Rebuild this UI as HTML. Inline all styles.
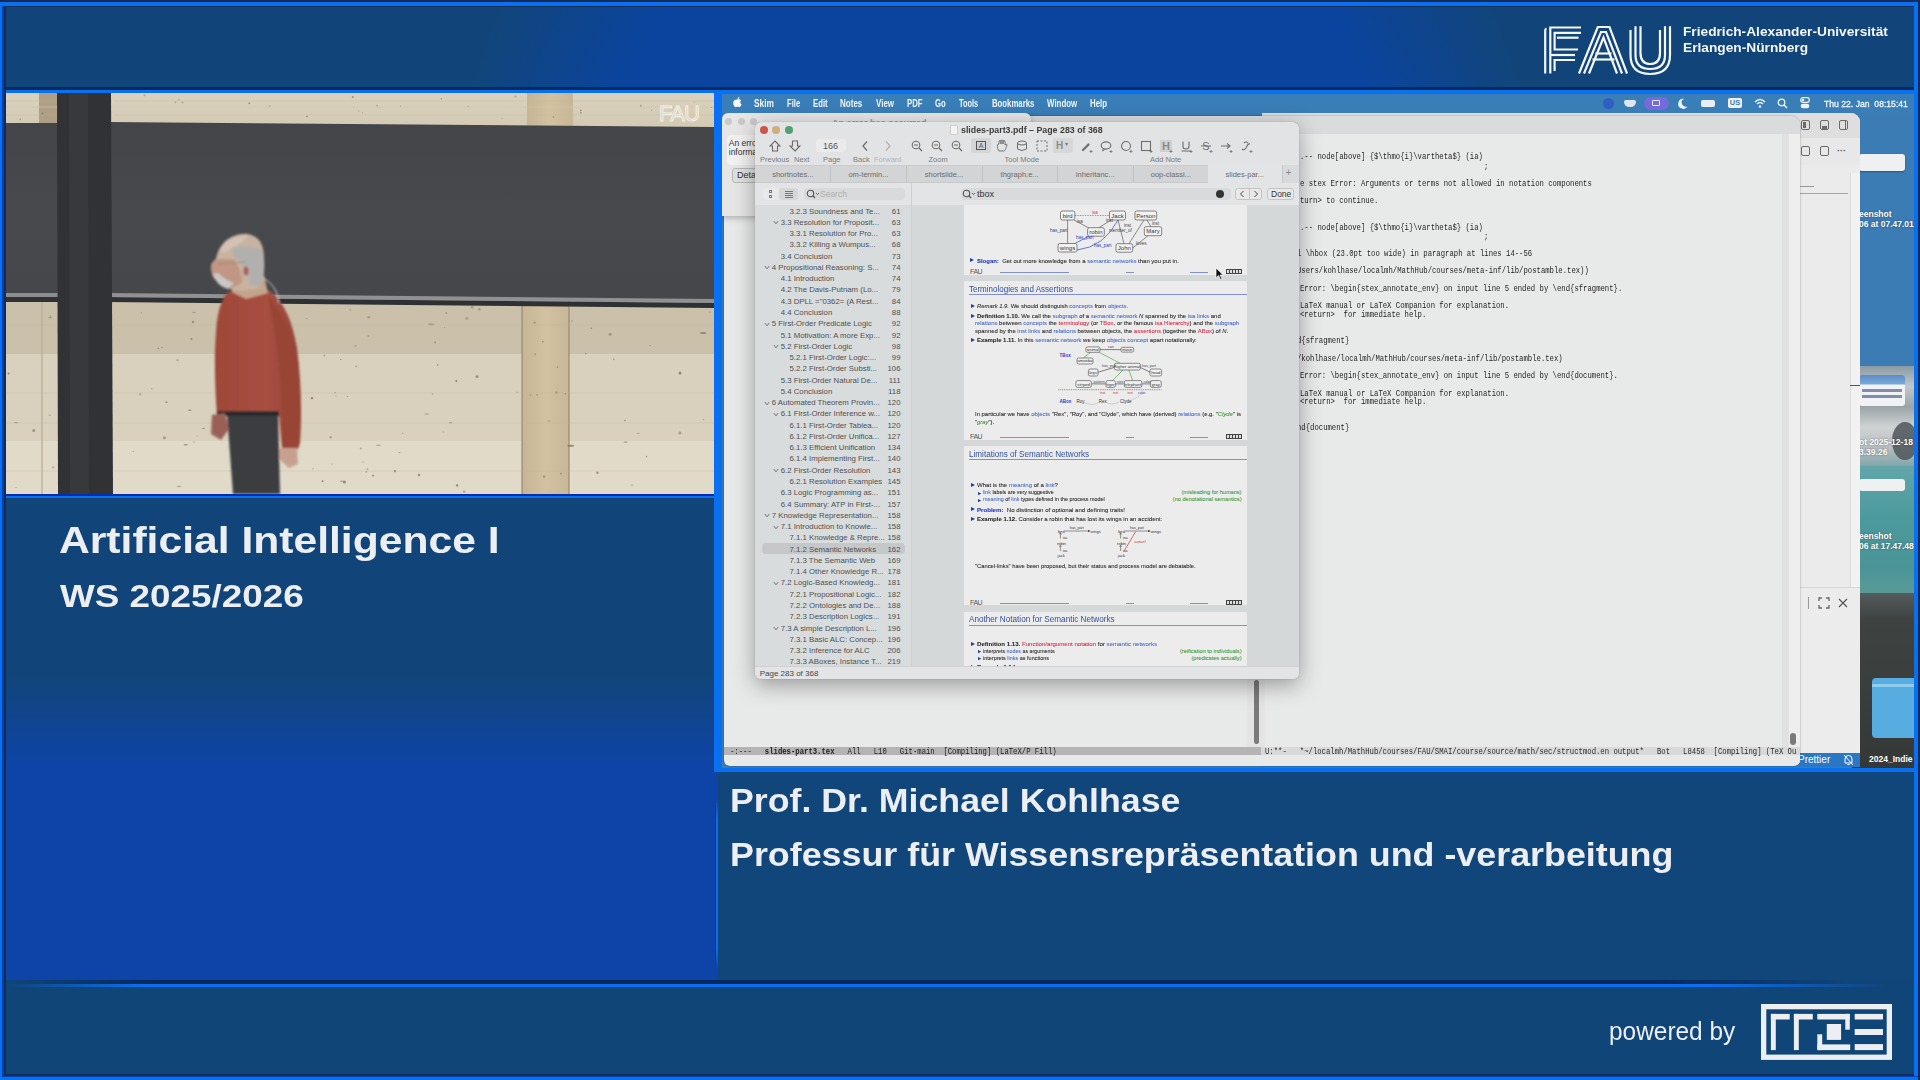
<!DOCTYPE html>
<html><head><meta charset="utf-8">
<style>
*{box-sizing:border-box}
html,body{margin:0;padding:0}
body{width:1920px;height:1080px;overflow:hidden;position:relative;background:#0a70f2;font-family:"Liberation Sans",sans-serif}
.a{position:absolute}
.t{position:absolute;white-space:nowrap;line-height:1.2}
.pnl{background:#104578}
</style></head><body>
<div class="a" style="left:0;top:0;width:1920px;height:2px;background:#172a55"></div>
<div class="a" style="left:1918px;top:0;width:2px;height:1080px;background:#172a55"></div>
<div class="a" style="left:2px;top:6px;width:2px;height:1071px;background:#0040b0"></div>
<div class="a" style="left:4px;top:6px;width:2px;height:1071px;background:#172a55"></div>
<!-- header -->
<div class="a" style="left:5px;top:6px;width:1909px;height:84px;border-left:1px solid #172a55;border-top:1px solid #14305a;border-bottom:3px solid #0a2c5c;background:radial-gradient(ellipse 590px 896px at 990px 487px,#0b449e 0%,#0b449e 78%,#11457a 100%)"></div>
<svg class="a" style="left:1543px;top:25px" width="132" height="52" viewBox="0 0 132 52">
<g fill="none" stroke="#f4f6f9" stroke-width="2.2" stroke-linejoin="miter">
<!-- F -->
<path d="M2.2,48.5 V5.5 Q2.2,4 3.5,3.5"></path>
<path d="M7.3,48.5 V2.5 H38"></path>
<path d="M38,7.8 H11.6 V24.5 H35"></path>
<path d="M14,12.7 H35.5"></path>
<path d="M7.3,30 H32"></path>
<path d="M32,35 H11.6 V46"></path>
<!-- A -->
<path d="M36,48.5 L54.8,2 H66.5 L84,48.5"></path>
<path d="M41,48.5 L58,7 H63 L79,48.5"></path>
<path d="M46,48.5 L60.5,12.5 L74,48.5"></path>
<path d="M52.5,28.5 H68.5"></path>
<path d="M49.5,34.5 H71.5"></path>
<!-- U -->
<path d="M87.5,5 V30 C87.5,43 95,49 107.2,49 C119.5,49 127,43 127,30 V1.3"></path>
<path d="M92.5,1.3 V30 C92.5,40 98,44 107.2,44 C116.5,44 122,40 122,30 V1.3"></path>
<path d="M97.5,1.3 V28 C97.5,35.5 101,39 107.2,39 C113.5,39 117,35.5 117,28 V5"></path>
</g>
</svg>
<div class="t" style="left: 1682.5px; top: 24px; font-size: 13.5px; line-height: 15px; color: rgb(244, 246, 249); font-weight: bold; transform: scaleX(1.0149); transform-origin: 0px 0px;">Friedrich-Alexander-Universität</div>
<div class="t" style="left: 1682.5px; top: 39.5px; font-size: 13.5px; line-height: 15px; color: rgb(244, 246, 249); font-weight: bold; transform: scaleX(1.0163); transform-origin: 0px 0px;">Erlangen-Nürnberg</div>

<!-- video -->
<div class="a" style="left:6px;top:93px;width:708px;height:401px;overflow:hidden"><svg width="708" height="401" viewBox="0 0 708 401">
<defs>
<linearGradient id="wd1" x1="0" y1="0" x2="0" y2="1"><stop offset="0" stop-color="#dad2bf"></stop><stop offset="1" stop-color="#d3cab4"></stop></linearGradient>
<linearGradient id="bb" x1="0" y1="0" x2="0" y2="1"><stop offset="0" stop-color="#434549"></stop><stop offset="0.5" stop-color="#47494d"></stop><stop offset="1" stop-color="#45474b"></stop></linearGradient>
<linearGradient id="beam" x1="0" y1="0" x2="1" y2="0"><stop offset="0" stop-color="#c6b595"></stop><stop offset="0.5" stop-color="#d2c2a2"></stop><stop offset="1" stop-color="#c8b796"></stop></linearGradient>
</defs>
<rect x="0" y="0" width="708" height="401" fill="#d8ceb9"></rect>
<!-- top wood strip -->
<rect x="0" y="0" width="708" height="36" fill="url(#wd1)"></rect>
<rect x="33" y="0" width="19" height="32" fill="#ae9f85"></rect>
<rect x="521" y="0" width="46" height="34" fill="url(#beam)"></rect>
<line x1="0" y1="14" x2="708" y2="14" stroke="#cfc4ab" stroke-width="1" opacity="0.6"></line>
<!-- lower wood bands -->
<rect x="0" y="207" width="708" height="54" fill="#cbc1ab"></rect>
<rect x="0" y="261" width="708" height="87" fill="#d9d1be"></rect>
<rect x="0" y="348" width="708" height="53" fill="#e1dac9"></rect>
<rect x="516" y="205" width="47" height="196" fill="url(#beam)"></rect>
<line x1="516" y1="205" x2="516" y2="401" stroke="#8c7f68" stroke-width="1"></line>
<line x1="563" y1="205" x2="563" y2="401" stroke="#8c7f68" stroke-width="1"></line>
<line x1="36" y1="205" x2="36" y2="401" stroke="#b8ab92" stroke-width="1.2"></line>
<!-- left blackboard piece -->
<rect x="0" y="30" width="55" height="171" fill="url(#bb)"></rect>
<rect x="0" y="200" width="55" height="4" fill="#8d8e8f"></rect>
<rect x="0" y="204" width="55" height="5" fill="#303134"></rect>
<!-- main blackboard -->
<polygon points="102,29 708,34 708,207 102,201" fill="url(#bb)"></polygon>
<polygon points="100,200 708,206 708,210 100,204" fill="#909192"></polygon>
<polygon points="100,204 708,210 708,215 100,209" fill="#2f3033"></polygon>
<!-- pillar -->
<polygon points="51,0 105,0 107,401 52,401" fill="#303236"></polygon>
<polygon points="63,0 82,0 83,401 64,401" fill="#37393d"></polygon>
<!-- wood knots -->
<g fill="#7d6f5a">
<circle cx="460.9" cy="225.6" r="1.5" opacity="0.39"></circle>
<ellipse cx="644.1" cy="252.4" rx="1.3" ry="0.4" opacity="0.55"></ellipse>
<circle cx="585.4" cy="235.3" r="0.8" opacity="0.63"></circle>
<ellipse cx="43.8" cy="322.1" rx="1.3" ry="0.4" opacity="0.79"></ellipse>
<circle cx="607.8" cy="266.4" r="0.8" opacity="0.59"></circle>
<circle cx="396.7" cy="340.2" r="0.6" opacity="0.61"></circle>
<circle cx="44.5" cy="223.2" r="0.8" opacity="0.57"></circle>
<circle cx="550.3" cy="299.5" r="1.2" opacity="0.51"></circle>
<circle cx="127.3" cy="358.6" r="0.6" opacity="0.61"></circle>
<ellipse cx="619.6" cy="349.1" rx="2.2" ry="0.7" opacity="0.62"></ellipse>
<circle cx="362.4" cy="243.0" r="1.0" opacity="0.42"></circle>
<circle cx="27.8" cy="337.6" r="1.5" opacity="0.61"></circle>
<ellipse cx="420.8" cy="321.0" rx="2.6" ry="0.8" opacity="0.38"></ellipse>
<circle cx="191.1" cy="343.0" r="0.6" opacity="0.38"></circle>
<circle cx="458.2" cy="398.7" r="1.2" opacity="0.48"></circle>
<circle cx="473.4" cy="216.2" r="1.2" opacity="0.51"></circle>
<circle cx="349.5" cy="253.0" r="1.0" opacity="0.41"></circle>
<circle cx="389.0" cy="378.1" r="1.2" opacity="0.74"></circle>
<ellipse cx="626.0" cy="392.1" rx="1.8" ry="0.6" opacity="0.39"></ellipse>
<circle cx="466.2" cy="214.3" r="1.5" opacity="0.43"></circle>
<circle cx="431.7" cy="271.9" r="0.8" opacity="0.66"></circle>
<circle cx="437.3" cy="339.1" r="0.6" opacity="0.56"></circle>
<circle cx="673.9" cy="339.9" r="1.5" opacity="0.53"></circle>
<ellipse cx="44.1" cy="224.7" rx="1.8" ry="0.6" opacity="0.55"></ellipse>
<ellipse cx="425.3" cy="231.2" rx="3.3" ry="1.0" opacity="0.42"></ellipse>
<circle cx="619.0" cy="327.4" r="0.8" opacity="0.64"></circle>
<circle cx="426.4" cy="301.1" r="0.6" opacity="0.73"></circle>
<circle cx="329.9" cy="303.0" r="0.6" opacity="0.41"></circle>
<circle cx="524.2" cy="302.0" r="0.8" opacity="0.58"></circle>
<circle cx="674.0" cy="280.0" r="1.5" opacity="0.76"></circle>
<circle cx="367.0" cy="382.8" r="1.0" opacity="0.70"></circle>
<circle cx="551.6" cy="274.0" r="0.8" opacity="0.63"></circle>
<circle cx="536.9" cy="248.7" r="0.8" opacity="0.72"></circle>
<circle cx="160.5" cy="309.3" r="1.0" opacity="0.68"></circle>
<circle cx="559.4" cy="300.8" r="0.8" opacity="0.66"></circle>
<circle cx="316.6" cy="388.2" r="1.0" opacity="0.78"></circle>
<circle cx="156.1" cy="254.6" r="0.8" opacity="0.50"></circle>
<circle cx="697.6" cy="326.7" r="0.6" opacity="0.57"></circle>
<circle cx="566.1" cy="227.9" r="0.6" opacity="0.76"></circle>
<circle cx="531.1" cy="301.9" r="0.8" opacity="0.55"></circle>
<ellipse cx="511.1" cy="299.1" rx="1.3" ry="0.4" opacity="0.68"></ellipse>
<circle cx="640.6" cy="363.6" r="0.8" opacity="0.63"></circle>
<ellipse cx="335.8" cy="388.2" rx="1.8" ry="0.6" opacity="0.60"></ellipse>
<circle cx="10.1" cy="394.5" r="0.6" opacity="0.59"></circle>
<circle cx="307.1" cy="375.9" r="0.8" opacity="0.36"></circle>
<circle cx="354.8" cy="355.6" r="1.0" opacity="0.47"></circle>
<circle cx="413.0" cy="382.0" r="1.2" opacity="0.72"></circle>
<circle cx="361.5" cy="376.1" r="0.8" opacity="0.62"></circle>
<circle cx="438.3" cy="234.6" r="0.6" opacity="0.50"></circle>
<ellipse cx="393.3" cy="359.4" rx="1.3" ry="0.4" opacity="0.75"></ellipse>
<circle cx="135.4" cy="219.9" r="0.6" opacity="0.58"></circle>
<circle cx="538.1" cy="383.5" r="1.2" opacity="0.50"></circle>
<circle cx="429.1" cy="249.5" r="1.0" opacity="0.55"></circle>
<circle cx="338.4" cy="389.0" r="1.5" opacity="0.74"></circle>
<ellipse cx="183.8" cy="317.2" rx="1.8" ry="0.6" opacity="0.73"></ellipse>
<circle cx="555.0" cy="380.6" r="0.8" opacity="0.77"></circle>
<circle cx="528.7" cy="229.7" r="1.2" opacity="0.42"></circle>
<circle cx="158.4" cy="344.8" r="1.5" opacity="0.53"></circle>
<circle cx="324.7" cy="344.2" r="1.2" opacity="0.50"></circle>
<ellipse cx="362.7" cy="224.1" rx="1.8" ry="0.6" opacity="0.79"></ellipse>
<ellipse cx="188.0" cy="219.4" rx="1.8" ry="0.6" opacity="0.47"></ellipse>
<circle cx="579.8" cy="260.6" r="0.8" opacity="0.59"></circle>
<circle cx="350.2" cy="273.5" r="1.0" opacity="0.38"></circle>
<circle cx="301.1" cy="225.6" r="0.6" opacity="0.64"></circle>
<circle cx="47.2" cy="374.2" r="1.2" opacity="0.36"></circle>
<circle cx="440.2" cy="220.1" r="0.8" opacity="0.77"></circle>
<circle cx="185.4" cy="246.1" r="1.0" opacity="0.63"></circle>
<circle cx="145.8" cy="295.8" r="0.8" opacity="0.47"></circle>
<circle cx="704.1" cy="218.9" r="0.6" opacity="0.68"></circle>
<circle cx="134.1" cy="301.3" r="1.2" opacity="0.40"></circle>
<circle cx="306.0" cy="305.1" r="1.2" opacity="0.79"></circle>
<circle cx="152.3" cy="255.2" r="0.8" opacity="0.72"></circle>
<circle cx="450.3" cy="288.1" r="1.0" opacity="0.79"></circle>
<ellipse cx="10.1" cy="329.6" rx="2.2" ry="0.7" opacity="0.54"></ellipse>
<circle cx="471.0" cy="283.6" r="1.5" opacity="0.65"></circle>
<circle cx="171.5" cy="267.1" r="1.2" opacity="0.43"></circle>
<circle cx="2.6" cy="280.5" r="1.0" opacity="0.79"></circle>
<ellipse cx="173.1" cy="393.5" rx="2.2" ry="0.7" opacity="0.45"></ellipse>
<ellipse cx="197.5" cy="335.3" rx="1.8" ry="0.6" opacity="0.58"></ellipse>
<circle cx="187.0" cy="228.9" r="1.2" opacity="0.61"></circle>
<circle cx="604.1" cy="241.2" r="1.5" opacity="0.53"></circle>
<ellipse cx="697.2" cy="240.1" rx="3.3" ry="1.0" opacity="0.64"></ellipse>
<circle cx="591.4" cy="379.7" r="1.2" opacity="0.68"></circle>
<circle cx="357.1" cy="369.0" r="0.6" opacity="0.72"></circle>
<ellipse cx="632.1" cy="340.4" rx="1.8" ry="0.6" opacity="0.39"></ellipse>
<circle cx="451.1" cy="392.4" r="1.2" opacity="0.73"></circle>
<ellipse cx="444.5" cy="329.7" rx="1.8" ry="0.6" opacity="0.57"></ellipse>
<ellipse cx="564.8" cy="352.7" rx="3.3" ry="1.0" opacity="0.75"></ellipse>
<ellipse cx="372.4" cy="352.2" rx="2.6" ry="0.8" opacity="0.46"></ellipse>
<circle cx="188.0" cy="349.1" r="0.8" opacity="0.45"></circle>
<circle cx="325.9" cy="371.0" r="0.6" opacity="0.57"></circle>
<ellipse cx="543.0" cy="328.0" rx="1.8" ry="0.6" opacity="0.38"></ellipse>
<ellipse cx="179.8" cy="351.7" rx="2.2" ry="0.7" opacity="0.63"></ellipse>
<circle cx="341.6" cy="303.3" r="0.6" opacity="0.66"></circle>
<circle cx="329.0" cy="299.7" r="0.6" opacity="0.80"></circle>
<circle cx="334.8" cy="266.4" r="0.6" opacity="0.72"></circle>
<circle cx="318.2" cy="262.5" r="0.8" opacity="0.76"></circle>
<circle cx="529.2" cy="261.2" r="1.0" opacity="0.41"></circle>
<circle cx="360.2" cy="378.7" r="1.0" opacity="0.45"></circle>
<circle cx="344.2" cy="216.7" r="0.6" opacity="0.78"></circle>
<circle cx="138.6" cy="2.3" r="1.0" opacity="0.42"></circle>
<circle cx="263.5" cy="13.0" r="1.0" opacity="0.33"></circle>
<circle cx="655.2" cy="23.2" r="0.6" opacity="0.41"></circle>
<circle cx="36.5" cy="20.5" r="1.0" opacity="0.67"></circle>
<circle cx="176.5" cy="9.4" r="1.0" opacity="0.43"></circle>
<circle cx="547.4" cy="24.0" r="0.8" opacity="0.65"></circle>
<circle cx="574.9" cy="19.7" r="1.0" opacity="0.52"></circle>
<circle cx="509.5" cy="3.4" r="1.0" opacity="0.46"></circle>
<circle cx="435.4" cy="5.9" r="0.8" opacity="0.49"></circle>
<circle cx="645.6" cy="17.4" r="0.6" opacity="0.49"></circle>
<circle cx="243.3" cy="10.3" r="1.0" opacity="0.60"></circle>
<circle cx="462.2" cy="13.4" r="0.6" opacity="0.42"></circle>
<circle cx="394.6" cy="13.0" r="0.6" opacity="0.56"></circle>
<circle cx="574.8" cy="17.4" r="0.8" opacity="0.66"></circle>
<circle cx="705.5" cy="14.6" r="0.6" opacity="0.52"></circle>
<circle cx="172.8" cy="6.9" r="1.0" opacity="0.34"></circle>
<circle cx="169.3" cy="9.2" r="1.0" opacity="0.38"></circle>
<circle cx="14.2" cy="26.4" r="0.8" opacity="0.47"></circle>
<circle cx="371.1" cy="12.6" r="0.8" opacity="0.60"></circle>
<circle cx="352.7" cy="18.1" r="0.8" opacity="0.35"></circle>
<circle cx="356.4" cy="19.6" r="0.6" opacity="0.34"></circle>
<circle cx="634.9" cy="12.8" r="1.0" opacity="0.48"></circle>
<circle cx="675.4" cy="25.8" r="0.6" opacity="0.35"></circle>
<circle cx="301.0" cy="23.4" r="0.8" opacity="0.69"></circle>
<circle cx="346.8" cy="4.0" r="1.0" opacity="0.64"></circle>
<circle cx="688.3" cy="9.0" r="0.6" opacity="0.39"></circle>
<circle cx="496.3" cy="25.7" r="0.8" opacity="0.33"></circle>
</g>
<g stroke="#bfb197" stroke-width="0.6" opacity="0.5"><path d="M0,232 H51 M108,232 H708"></path><path d="M0,300 H51 M108,300 H708"></path><path d="M0,330 H51 M108,330 H708"></path><path d="M0,378 H51 M108,378 H708"></path><path d="M0,8 H51 M108,8 H708"></path><path d="M0,22 H51 M108,22 H708"></path></g>
<!-- FAU watermark -->
<text x="653" y="28" font-family="Liberation Sans" font-size="22" fill="none" stroke="#f4f0e8" stroke-width="1" letter-spacing="-1">FAU</text>
<!-- person -->
<defs><filter id="soft" x="-10%" y="-10%" width="120%" height="120%"><feGaussianBlur stdDeviation="0.9"></feGaussianBlur></filter>
<linearGradient id="shirt" x1="0" y1="0" x2="1" y2="0"><stop offset="0" stop-color="#9e4738"></stop><stop offset="0.6" stop-color="#a84f42"></stop><stop offset="1" stop-color="#944336"></stop></linearGradient></defs>
<g filter="url(#soft)">
<path d="M221,320 L272,320 L274,401 L227,401 Z" fill="#3b3d41"></path>
<path d="M222,199 C235,196 252,195 262,197 C276,206 286,225 291,255 C295,285 296,320 294,350 L292,356 L276,357 L273,322 L211,323 C209,295 208,265 210,240 C211,222 214,208 222,199 Z" fill="url(#shirt)"></path>
<path d="M262,203 C276,218 285,240 290,270 C293,300 294,330 292,356 L277,357 C277,330 276,300 273,272 C270,245 266,222 262,203 Z" fill="#984436"></path>
<rect x="211" y="318" width="62" height="5" fill="#2b2c2f"></rect>
<path d="M206,322 L219,320 L223,336 L215,347 L205,341 Z" fill="#9a6058"></path>
<path d="M273,355 L291,355 L292,371 L283,375 L273,366 Z" fill="#c8a090"></path>
<path d="M224,186 L258,182 L262,200 L240,206 L226,199 Z" fill="#c4a48c"></path>
<path d="M216,152 C222,144 232,140 242,141 C252,143 258,150 258,165 C259,175 258,186 254,195 L236,198 L224,196 C218,194 212,190 208,185 C206,181 205,177 205,174 C205,171 207,168 210,166 C211,160 213,156 216,152 Z" fill="#c7b3a0"></path>
<path d="M214,156 C220,146 232,142 242,143 C236,150 226,156 216,160 Z" fill="#d4c0b4"></path>
<path d="M226,155 C238,152 252,152 257,160 C259,172 258,186 254,194 L244,192 C242,182 236,170 228,164 Z" fill="#b2b0ae"></path>
<path d="M205,174 C205,170 208,167 212,166 L228,166 C232,172 236,180 236,190 L224,196 C216,193 209,188 206,182 Z" fill="#c29684"></path>
<path d="M207,181 C209,188 214,194 222,196 L228,190 C222,188 216,184 212,180 Z" fill="#c9c8c6"></path>
<path d="M211,171 L240,169" stroke="#6d6460" stroke-width="0.7" fill="none" opacity="0.6"></path>
<ellipse cx="240" cy="178" rx="2.6" ry="4.5" fill="#a8625a"></ellipse>
<path d="M257,185 C266,190 272,198 273,210" stroke="#d8d8d8" stroke-width="1" fill="none"></path>
</g>
</svg></div>
<div class="a" style="left:6px;top:494px;width:708px;height:2px;background:#0a2ab0"></div>
<!-- title panel -->
<div class="a" style="left:6px;top:498px;width:712px;height:482px;background:linear-gradient(#11457a 0px,#11457a 180px,#0e44a8 270px,#0e44a8 482px)"></div>
<div class="a" style="left:714px;top:90px;width:8px;height:682px;background:#0a70f2"></div>
<div class="t" style="left: 59.2px; top: 518.5px; font-weight: bold; font-size: 36px; color: rgb(236, 238, 242); transform: scaleX(1.1841); transform-origin: 0px 0px;">Artificial Intelligence I</div>
<div class="t" style="left: 60px; top: 577.5px; font-weight: bold; font-size: 31px; color: rgb(236, 238, 242); transform: scaleX(1.1888); transform-origin: 0px 0px;">WS 2025/2026</div>
<!-- prof panel -->
<div class="a" style="left:718px;top:772px;width:1196px;height:208px;background:#11467a"></div>
<div class="a" style="left:715.5px;top:798px;width:2.2px;height:172px;background:linear-gradient(rgba(10,112,242,0),#0a6ef0 12%,#0a6ef0 88%,rgba(10,112,242,0))"></div>
<div class="a" style="left:714.5px;top:805px;width:1px;height:160px;background:#0a3580;opacity:.7"></div>
<div class="t" style="left: 729.8px; top: 780.5px; font-weight: bold; font-size: 33px; color: rgb(236, 238, 242); transform: scaleX(1.082); transform-origin: 0px 0px;">Prof. Dr. Michael Kohlhase</div>
<div class="t" style="left: 729.6px; top: 834.5px; font-weight: bold; font-size: 33px; color: rgb(236, 238, 242); transform: scaleX(1.0857); transform-origin: 0px 0px;">Professur für Wissensrepräsentation und -verarbeitung</div>
<div class="a" style="left:6px;top:980px;width:1908px;height:4px;background:linear-gradient(90deg,#11457a 0px,#06285a 150px,#06285a 1650px,#11457a 1850px)"></div>
<div class="a" style="left:6px;top:984px;width:1908px;height:3px;background:linear-gradient(90deg,#11457a 0px,#0a70f2 140px,#0a70f2 1700px,#11457a 1880px)"></div>
<!-- footer -->
<div class="a pnl" style="left:6px;top:987px;width:1908px;height:89px;border-bottom:2px solid #172a55"></div>
<div class="a" style="left:2px;top:1076px;width:1916px;height:1px;background:#0040b0"></div>
<div class="t" style="left:1609px;top:1016px;font-size:25px;color:#eceef2;transform:scaleX(0.977);transform-origin:0 0">powered by</div>
<svg class="a" style="left:1761px;top:1004px" width="131" height="56" viewBox="0 0 131 56">
<rect x="2.65" y="2.65" width="125.7" height="50.6" fill="none" stroke="#eceef2" stroke-width="5.3"></rect>
<g fill="#eceef2">
<rect x="9.9" y="9.9" width="18.8" height="5.6"></rect><rect x="9.9" y="9.9" width="4.9" height="36.2"></rect>
<rect x="32.9" y="9.9" width="18.9" height="5.6"></rect><rect x="32.9" y="9.9" width="4.9" height="36.2"></rect>
<rect x="56.3" y="9.9" width="32.5" height="5.6"></rect><rect x="84.3" y="9.9" width="4.5" height="15.8"></rect>
<rect x="65.8" y="20" width="14.3" height="15.9"></rect>
<rect x="56.3" y="30.3" width="4.9" height="15.8"></rect><rect x="56.3" y="40.4" width="32.9" height="5.7"></rect>
<rect x="93.7" y="9.9" width="28.3" height="5.6"></rect><rect x="93.7" y="25" width="28.3" height="6"></rect><rect x="93.7" y="40.1" width="28.3" height="6"></rect>
</g>
</svg>

<!-- screen -->
<div class="a" style="left:722px;top:94px;width:1192px;height:674px;overflow:hidden">
<div class="a" style="left:0;top:0;width:1192px;height:674px;background:#3b7cb5"></div>
<div class="a" style="left:1130px;top:272px;width:62px;height:102px;background:linear-gradient(#8a9aa4,#c2c8ca 20%,#9aa4a8 40%,#d0d3d3 60%,#b8bec0 80%,#7aa4a8)"></div>
<div class="a" style="left:1170px;top:328px;width:26px;height:38px;border-radius:50%;background:#4d5659;opacity:.85"></div>
<div class="a" style="left:1130px;top:372px;width:62px;height:127px;background:linear-gradient(#62a6aa,#4c9a9c 40%,#4a9497 80%,#5a9a98)"></div>
<div class="a" style="left:1130px;top:499px;width:62px;height:175px;background:linear-gradient(#555b5a,#3e4342 15%,#393d3c 60%,#343837)"></div>
<div class="a" style="left:1137px;top:60px;width:46px;height:17px;background:#eef0f2;border-radius:3px;box-shadow:0 1px 2px rgba(0,0,0,.3)"></div>
<div class="a" style="left:1137px;top:281px;width:46px;height:31px;background:linear-gradient(#5a8ec8 0,#7aa8d8 9px,#f0f2f4 10px);border-radius:3px"></div>
<div class="a" style="left:1140px;top:295px;width:40px;height:3px;background:#3a4a7a;opacity:.6"></div><div class="a" style="left:1140px;top:301px;width:40px;height:3px;background:#3a4a7a;opacity:.6"></div>
<div class="a" style="left:1137px;top:385px;width:46px;height:12px;background:#eef0f2;border-radius:3px"></div>
<div class="t" style="left:1137px;top:115px;font-size:8.5px;color:#fff;font-weight:bold;text-shadow:0 0 2px rgba(0,0,0,.5)">eenshot</div>
<div class="t" style="left:1137px;top:125px;font-size:8.5px;color:#fff;font-weight:bold;text-shadow:0 0 2px rgba(0,0,0,.5)">06 at 07.47.01</div>
<div class="t" style="left:1137px;top:343px;font-size:8.5px;color:#fff;font-weight:bold;text-shadow:0 0 2px rgba(0,0,0,.5)">ot 2025-12-18</div>
<div class="t" style="left:1137px;top:353px;font-size:8.5px;color:#fff;font-weight:bold;text-shadow:0 0 2px rgba(0,0,0,.5)">3.39.26</div>
<div class="t" style="left:1137px;top:437px;font-size:8.5px;color:#fff;font-weight:bold;text-shadow:0 0 2px rgba(0,0,0,.5)">eenshot</div>
<div class="t" style="left:1137px;top:447px;font-size:8.5px;color:#fff;font-weight:bold;text-shadow:0 0 2px rgba(0,0,0,.5)">06 at 17.47.48</div>
<div class="a" style="left:1150px;top:584px;width:42px;height:60px;background:#58ade0;border-radius:4px 0 0 4px"></div>
<div class="a" style="left:1150px;top:590px;width:42px;height:3px;background:#8fcdf0"></div>
<div class="t" style="left:1147px;top:660px;font-size:8.5px;color:#fff;font-weight:bold">2024_Indie</div>
<div class="a" style="left:540px;top:19px;width:598px;height:654px;background:#ebebeb;border-radius:0 9px 0 0;overflow:hidden">
<div class="a" style="left:0;top:0;width:598px;height:25px;background:#dedede"></div>
<div class="a" style="left:0;top:25px;width:598px;height:27px;background:#e8e8e8"></div>
<div class="a" style="left:538.5px;top:7px;width:9px;height:10px;border:1.3px solid #6a6a6a;border-radius:2px"></div>
<div class="a" style="left:557.5px;top:7px;width:9px;height:10px;border:1.3px solid #6a6a6a;border-radius:2px"></div>
<div class="a" style="left:576.5px;top:7px;width:9px;height:10px;border:1.3px solid #6a6a6a;border-radius:2px"></div>
<div class="a" style="left:540.5px;top:9px;width:3px;height:6px;background:#6a6a6a"></div>
<div class="a" style="left:559.5px;top:13px;width:5px;height:3px;background:#6a6a6a"></div>
<div class="a" style="left:582.5px;top:8px;width:1px;height:8px;background:#6a6a6a"></div>
<div class="a" style="left:538.5px;top:33px;width:9px;height:10px;border:1.3px solid #6a6a6a;border-radius:2px"></div>
<div class="a" style="left:557.5px;top:33px;width:9px;height:10px;border:1.3px solid #6a6a6a;border-radius:2px"></div>
<div class="t" style="left:575px;top:33px;font-size:9px;color:#555;font-weight:bold">···</div>
<div class="a" style="left:588px;top:60px;width:10px;height:430px;background:#f2f2f2;border-left:1px solid #dcdcdc"></div>
<div class="a" style="left:538px;top:73px;width:14px;height:1px;background:#999"></div>
<div class="a" style="left:538px;top:79.5px;width:48px;height:1.2px;background:#c8a060"></div>
<div class="a" style="left:588px;top:272px;width:10px;height:1px;background:#555"></div>
<div class="a" style="left:0;top:474px;width:598px;height:1px;background:#d6d6d6"></div>
<div class="a" style="left:0;top:475px;width:598px;height:165px;background:#ececec"></div>
<div class="a" style="left:546px;top:484px;width:1px;height:12px;background:#999"></div>
<svg class="a" style="left:556px;top:484px" width="12" height="12" viewBox="0 0 12 12"><path d="M1,4 V1 H4 M8,1 H11 V4 M11,8 V11 H8 M4,11 H1 V8" stroke="#666" stroke-width="1.3" fill="none"></path></svg>
<svg class="a" style="left:576px;top:485px" width="10" height="10" viewBox="0 0 10 10"><path d="M1,1 L9,9 M9,1 L1,9" stroke="#555" stroke-width="1.2"></path></svg>
<div class="a" style="left:0;top:640px;width:598px;height:14px;background:#2a78c4"></div>
<div class="t" style="left:536px;top:641px;font-size:10px;color:#fff">Prettier</div>
<svg class="a" style="left:581px;top:641px" width="11" height="12" viewBox="0 0 11 12"><path d="M2,9 V5 Q2,1.5 5.5,1.5 Q9,1.5 9,5 V9 Z M4.5,10.5 H6.5" stroke="#fff" stroke-width="1" fill="none"></path><path d="M1,1 L10,11" stroke="#fff" stroke-width="1"></path></svg>
</div>
<div class="a" style="left:2px;top:21.5px;width:1076px;height:650.5px;background:#e8eae9;border-radius:9px 9px 6px 6px;overflow:hidden;box-shadow:0 0 2px rgba(0,0,0,.4)">
<div class="a" style="left:1058px;top:18px;width:7px;height:614px;background:#e1e1e1"></div><div class="a" style="left:1065px;top:18px;width:11px;height:614px;background:#eeeeee"></div>
<div class="a" style="left:0;top:0;width:1078px;height:18px;background:#dadbdc"></div>
<div class="a" style="left:523px;top:18px;width:18px;height:614px;background:#e4e4e4"></div>
<div class="a" style="left:529.5px;top:564.5px;width:5.5px;height:64px;background:#7a7a7a;border-radius:3px"></div>
<div class="a" style="left:1066px;top:617.5px;width:5.5px;height:12px;background:#7a7a7a;border-radius:3px"></div>
<div class="a" style="left:0;top:631.9px;width:537px;height:8px;background:#b4b4b4"></div>
<div class="a" style="left:537px;top:631.9px;width:539px;height:8px;background:#d9d9d9"></div>
<div class="t" style="left:5.9px;top:631.9px;font-size:8.6px;line-height:10px;color:#222;font-family:'Liberation Mono',monospace;white-space:pre;transform:scaleX(0.8445);transform-origin:0 0">-:---   <b>slides-part3.tex</b>   All   L10   Git-main  [Compiling] (LaTeX/P Fill)</div>
<div class="t" style="left:541px;top:631.9px;font-size:8.6px;line-height:10px;color:#2a2a2a;font-family:'Liberation Mono',monospace;white-space:pre;transform:scaleX(0.8445);transform-origin:0 0">U:**-   *~/localmh/MathHub/courses/FAU/SMAI/course/source/math/sec/structmod.en output*   Bot   L8458  [Compiling] (TeX Ou</div>
<div class="t" style="left:576px;top:36.8px;font-size:8.6px;line-height:10px;color:#1e1e1e;font-family:'Liberation Mono',monospace;white-space:pre;transform:scaleX(0.8445);transform-origin:0 0">.-- node[above] {$\thmo{i}\vartheta$} (ia)</div>
<div class="t" style="left:760px;top:46.0px;font-size:8.6px;line-height:10px;color:#1e1e1e;font-family:'Liberation Mono',monospace;white-space:pre;transform:scaleX(0.8445);transform-origin:0 0">;</div>
<div class="t" style="left:576px;top:63.1px;font-size:8.6px;line-height:10px;color:#1e1e1e;font-family:'Liberation Mono',monospace;white-space:pre;transform:scaleX(0.8445);transform-origin:0 0">e stex Error: Arguments or terms not allowed in notation components</div>
<div class="t" style="left:576px;top:80.5px;font-size:8.6px;line-height:10px;color:#1e1e1e;font-family:'Liberation Mono',monospace;white-space:pre;transform:scaleX(0.8445);transform-origin:0 0">turn&gt; to continue.</div>
<div class="t" style="left:576px;top:107.0px;font-size:8.6px;line-height:10px;color:#1e1e1e;font-family:'Liberation Mono',monospace;white-space:pre;transform:scaleX(0.8445);transform-origin:0 0">.-- node[above] {$\thmo{i}\vartheta$} (ia)</div>
<div class="t" style="left:760px;top:116.3px;font-size:8.6px;line-height:10px;color:#1e1e1e;font-family:'Liberation Mono',monospace;white-space:pre;transform:scaleX(0.8445);transform-origin:0 0">;</div>
<div class="t" style="left:572.7px;top:133.0px;font-size:8.6px;line-height:10px;color:#1e1e1e;font-family:'Liberation Mono',monospace;white-space:pre;transform:scaleX(0.8445);transform-origin:0 0">l \hbox (23.0pt too wide) in paragraph at lines 14--56</div>
<div class="t" style="left:572.5999999999999px;top:150.5px;font-size:8.6px;line-height:10px;color:#1e1e1e;font-family:'Liberation Mono',monospace;white-space:pre;transform:scaleX(0.8445);transform-origin:0 0">Users/kohlhase/localmh/MathHub/courses/meta-inf/lib/postamble.tex))</div>
<div class="t" style="left:576px;top:168.1px;font-size:8.6px;line-height:10px;color:#1e1e1e;font-family:'Liberation Mono',monospace;white-space:pre;transform:scaleX(0.8445);transform-origin:0 0">Error: \begin{stex_annotate_env} on input line 5 ended by \end{sfragment}.</div>
<div class="t" style="left:576px;top:185.5px;font-size:8.6px;line-height:10px;color:#1e1e1e;font-family:'Liberation Mono',monospace;white-space:pre;transform:scaleX(0.8445);transform-origin:0 0">LaTeX manual or LaTeX Companion for explanation.</div>
<div class="t" style="left:576px;top:194.3px;font-size:8.6px;line-height:10px;color:#1e1e1e;font-family:'Liberation Mono',monospace;white-space:pre;transform:scaleX(0.8445);transform-origin:0 0">&lt;return&gt;  for immediate help.</div>
<div class="t" style="left:573px;top:220.5px;font-size:8.6px;line-height:10px;color:#1e1e1e;font-family:'Liberation Mono',monospace;white-space:pre;transform:scaleX(0.8445);transform-origin:0 0">d{sfragment}</div>
<div class="t" style="left:572.5px;top:238.0px;font-size:8.6px;line-height:10px;color:#1e1e1e;font-family:'Liberation Mono',monospace;white-space:pre;transform:scaleX(0.8445);transform-origin:0 0">/kohlhase/localmh/MathHub/courses/meta-inf/lib/postamble.tex)</div>
<div class="t" style="left:576px;top:255.5px;font-size:8.6px;line-height:10px;color:#1e1e1e;font-family:'Liberation Mono',monospace;white-space:pre;transform:scaleX(0.8445);transform-origin:0 0">Error: \begin{stex_annotate_env} on input line 5 ended by \end{document}.</div>
<div class="t" style="left:576px;top:273.1px;font-size:8.6px;line-height:10px;color:#1e1e1e;font-family:'Liberation Mono',monospace;white-space:pre;transform:scaleX(0.8445);transform-origin:0 0">LaTeX manual or LaTeX Companion for explanation.</div>
<div class="t" style="left:576px;top:281.7px;font-size:8.6px;line-height:10px;color:#1e1e1e;font-family:'Liberation Mono',monospace;white-space:pre;transform:scaleX(0.8445);transform-origin:0 0">&lt;return&gt;  for immediate help.</div>
<div class="t" style="left:572.5px;top:307.9px;font-size:8.6px;line-height:10px;color:#1e1e1e;font-family:'Liberation Mono',monospace;white-space:pre;transform:scaleX(0.8445);transform-origin:0 0">nd{document}</div>
</div>
<div class="a" style="left:0;top:19px;width:309px;height:103px;background:#e6e6e6;border-radius:6px 6px 0 0;box-shadow:0 2px 6px rgba(0,0,0,.25);overflow:hidden">
<div class="a" style="left:3.25px;top:5px;width:7px;height:7px;border-radius:50%;background:#c9c9c9"></div>
<div class="a" style="left:15.5px;top:5px;width:7px;height:7px;border-radius:50%;background:#c9c9c9"></div>
<div class="a" style="left:28.25px;top:5px;width:7px;height:7px;border-radius:50%;background:#c9c9c9"></div>
<div class="t" style="left:110px;top:4.5px;font-size:9px;color:#999;font-weight:bold">An error has occurred</div>
<div class="a" style="left:5px;top:22px;width:30px;height:30px;background:#f1f1f1;border-radius:4px"></div>
<div class="t" style="left:6.75px;top:25.5px;font-size:8.5px;color:#333;line-height:9px">An error<br>informat</div>
<div class="a" style="left:9.5px;top:55px;width:40px;height:15px;background:#e0e0e0;border:1px solid #b8b8b8;border-radius:3px"></div>
<div class="t" style="left:15px;top:57px;font-size:9px;color:#333">Details</div>
</div>
<div class="a" style="left:0;top:0;width:1192px;height:19px;background:#3a7eb8"></div>
<svg class="a" style="left:11px;top:3px" width="9" height="11" viewBox="0 0 9 11"><path d="M4.5,2.6 C5.6,2.2 7.4,2.2 8.2,3.6 C6.8,4.4 7,6.6 8.6,7.2 C8.1,8.6 7.2,10.2 6.2,10.2 C5.4,10.2 5.2,9.8 4.4,9.8 C3.6,9.8 3.3,10.2 2.6,10.2 C1.4,10.2 0.2,7.8 0.2,6 C0.2,3.2 2.8,2.2 4.5,2.6 Z M4.6,2.2 C4.6,1.2 5.4,0.2 6.4,0.1 C6.5,1.2 5.6,2.2 4.6,2.2 Z" fill="#f4f6f9"></path></svg>
<div class="t" style="left: 31.75px; top: 4px; font-size: 10px; color: rgb(242, 245, 248); font-weight: bold; transform: scaleX(0.8333); transform-origin: 0px 0px;">Skim</div>
<div class="t" style="left: 64.7px; top: 4px; font-size: 10px; color: rgb(242, 245, 248); font-weight: bold; transform: scaleX(0.7647); transform-origin: 0px 0px;">File</div>
<div class="t" style="left: 91px; top: 4px; font-size: 10px; color: rgb(242, 245, 248); font-weight: bold; transform: scaleX(0.7737); transform-origin: 0px 0px;">Edit</div>
<div class="t" style="left: 118.4px; top: 4px; font-size: 10px; color: rgb(242, 245, 248); font-weight: bold; transform: scaleX(0.8036); transform-origin: 0px 0px;">Notes</div>
<div class="t" style="left: 153.6px; top: 4px; font-size: 10px; color: rgb(242, 245, 248); font-weight: bold; transform: scaleX(0.8); transform-origin: 0px 0px;">View</div>
<div class="t" style="left: 184.5px; top: 4px; font-size: 10px; color: rgb(242, 245, 248); font-weight: bold; transform: scaleX(0.775); transform-origin: 0px 0px;">PDF</div>
<div class="t" style="left: 212.6px; top: 4px; font-size: 10px; color: rgb(242, 245, 248); font-weight: bold; transform: scaleX(0.7714); transform-origin: 0px 0px;">Go</div>
<div class="t" style="left: 237px; top: 4px; font-size: 10px; color: rgb(242, 245, 248); font-weight: bold; transform: scaleX(0.7423); transform-origin: 0px 0px;">Tools</div>
<div class="t" style="left: 269.5px; top: 4px; font-size: 10px; color: rgb(242, 245, 248); font-weight: bold; transform: scaleX(0.7778); transform-origin: 0px 0px;">Bookmarks</div>
<div class="t" style="left: 324.7px; top: 4px; font-size: 10px; color: rgb(242, 245, 248); font-weight: bold; transform: scaleX(0.7895); transform-origin: 0px 0px;">Window</div>
<div class="t" style="left: 367.8px; top: 4px; font-size: 10px; color: rgb(242, 245, 248); font-weight: bold; transform: scaleX(0.7818); transform-origin: 0px 0px;">Help</div>
<div class="a" style="left:881px;top:4px;width:11px;height:11px;border-radius:50%;background:#2d5fc4"></div>
<div class="a" style="left:902px;top:6px;width:12px;height:7px;border-radius:2px 2px 6px 6px;background:#dfe6ee"></div>
<div class="a" style="left:922px;top:3px;width:25px;height:13px;border-radius:7px;background:#7669d9"></div>
<div class="a" style="left:930px;top:6px;width:8px;height:6px;border:1.3px solid #e8e8ff;border-radius:1px"></div>
<svg class="a" style="left:956px;top:4px" width="10" height="11" viewBox="0 0 10 11"><path d="M6,0.8 A5,5 0 1 0 9.6,8.2 A4,4 0 0 1 6,0.8 Z" fill="#f0f4f8"></path></svg>
<div class="a" style="left:979px;top:6px;width:14px;height:7px;border-radius:2px;background:#e9eef3"></div>
<div class="a" style="left:1006px;top:4px;width:14px;height:10px;border-radius:2px;background:#eef2f6;color:#3a7eb8;font-size:7.5px;font-weight:bold;line-height:10px;text-align:center">US</div>
<svg class="a" style="left:1032px;top:4px" width="12" height="10" viewBox="0 0 12 10"><path d="M1,4 Q6,-1 11,4" stroke="#f0f4f8" stroke-width="1.6" fill="none"></path><path d="M3,6 Q6,3 9,6" stroke="#f0f4f8" stroke-width="1.6" fill="none"></path><circle cx="6" cy="8.5" r="1.2" fill="#f0f4f8"></circle></svg>
<svg class="a" style="left:1055px;top:4px" width="11" height="11" viewBox="0 0 11 11"><circle cx="4.5" cy="4.5" r="3.3" stroke="#f0f4f8" stroke-width="1.3" fill="none"></circle><path d="M7,7 L10,10" stroke="#f0f4f8" stroke-width="1.4"></path></svg>
<svg class="a" style="left:1078px;top:3px" width="10" height="12" viewBox="0 0 10 12"><rect x="0.7" y="0.7" width="8.6" height="4.6" rx="2.3" stroke="#f0f4f8" stroke-width="1.2" fill="none"></rect><rect x="0.7" y="6.7" width="8.6" height="4.6" rx="2.3" fill="#f0f4f8"></rect><circle cx="3" cy="3" r="1.3" fill="#f0f4f8"></circle></svg>
<div class="t" style="left: 1102px; top: 3.5px; font-size: 9.6px; color: rgb(242, 245, 248); -webkit-text-stroke: 0.3px rgb(242, 245, 248); transform: scaleX(0.8989); transform-origin: 0px 0px;">Thu 22. Jan&nbsp; 08:15:41</div>
<div class="a" style="left:33px;top:28px;width:544px;height:557px;background:#e2e3e4;border-radius:6px;overflow:hidden;box-shadow:0 6px 22px rgba(0,0,0,.35),0 0 1px rgba(0,0,0,.4)">
<div class="a" style="left:4.75px;top:4px;width:8px;height:8px;border-radius:50%;background:#cb5549"></div>
<div class="a" style="left:17px;top:4px;width:8px;height:8px;border-radius:50%;background:#d3ad79"></div>
<div class="a" style="left:29.75px;top:4px;width:8px;height:8px;border-radius:50%;background:#52a06b"></div>
<div class="a" style="left:195px;top:3px;width:8px;height:10px;background:#f4f4f4;border:1px solid #cfcfcf;border-radius:1px"></div>
<div class="t" style="left: 206px; top: 2px; font-size: 9.5px; color: rgb(60, 60, 60); font-weight: bold; transform: scaleX(0.9281); transform-origin: 0px 0px;">slides-part3.pdf – Page 283 of 368</div>
<svg class="a" style="left:14px;top:18px" width="12" height="12" viewBox="0 0 12 12"><path d="M6,1 L11,6 H8.5 V11 H3.5 V6 H1 Z" stroke="#6b6b6b" stroke-width="1.1" fill="none"></path></svg>
<svg class="a" style="left:34px;top:18px" width="12" height="12" viewBox="0 0 12 12"><path d="M6,11 L11,6 H8.5 V1 H3.5 V6 H1 Z" stroke="#6b6b6b" stroke-width="1.1" fill="none"></path></svg>
<div class="a" style="left:61px;top:17px;width:30px;height:13px;background:#ebebeb;border-radius:3px"></div>
<div class="t" style="left:68px;top:18.5px;font-size:9px;color:#555">166</div>
<svg class="a" style="left:106px;top:18px" width="8" height="12" viewBox="0 0 8 12"><path d="M6,1.5 L2,6 L6,10.5" stroke="#6b6b6b" stroke-width="1.2" fill="none"></path></svg>
<svg class="a" style="left:129px;top:18px" width="8" height="12" viewBox="0 0 8 12"><path d="M2,1.5 L6,6 L2,10.5" stroke="#b0b0b0" stroke-width="1.2" fill="none"></path></svg>
<svg class="a" style="left:156px;top:18px" width="12" height="12" viewBox="0 0 12 12"><circle cx="5" cy="5" r="3.8" stroke="#6b6b6b" stroke-width="1.1" fill="none"></circle><path d="M8,8 L11,11" stroke="#6b6b6b" stroke-width="1.2"></path><path d="M3,5 H7" stroke="#6b6b6b" stroke-width="1"></path></svg>
<svg class="a" style="left:176px;top:18px" width="12" height="12" viewBox="0 0 12 12"><circle cx="5" cy="5" r="3.8" stroke="#6b6b6b" stroke-width="1.1" fill="none"></circle><path d="M8,8 L11,11" stroke="#6b6b6b" stroke-width="1.2"></path><path d="M3,5 H7" stroke="#6b6b6b" stroke-width="1"></path></svg>
<svg class="a" style="left:196px;top:18px" width="12" height="12" viewBox="0 0 12 12"><circle cx="5" cy="5" r="3.8" stroke="#6b6b6b" stroke-width="1.1" fill="none"></circle><path d="M8,8 L11,11" stroke="#6b6b6b" stroke-width="1.2"></path><path d="M3,5 H7" stroke="#6b6b6b" stroke-width="1"></path></svg>
<div class="a" style="left:216px;top:16px;width:20px;height:15px;background:#d4d5d6;border-radius:3px"></div>
<div class="a" style="left:221px;top:19px;width:10px;height:9px;border:1.1px solid #555;font-size:7px;line-height:7px;text-align:center;color:#555">A</div>
<svg class="a" style="left:241px;top:17px" width="12" height="13" viewBox="0 0 12 13"><path d="M3,12 C1,9 1,6 2,5 L3,5 L3,2 Q4,1 5,2 L5,5 L5,1.5 Q6,0.5 7,1.5 L7,5 L7,2 Q8,1 9,2 L9,6 L10,5 Q11,5 11,6 C10,9 9,12 8,12 Z" stroke="#6b6b6b" stroke-width="0.9" fill="none"></path></svg>
<svg class="a" style="left:261px;top:18px" width="12" height="12" viewBox="0 0 12 12"><ellipse cx="6" cy="3" rx="4.5" ry="2" stroke="#6b6b6b" stroke-width="1" fill="none"></ellipse><path d="M1.5,3 V9 Q6,12 10.5,9 V3" stroke="#6b6b6b" stroke-width="1" fill="none"></path></svg>
<svg class="a" style="left:281px;top:18px" width="12" height="12" viewBox="0 0 12 12"><rect x="1" y="1" width="10" height="10" stroke="#6b6b6b" stroke-width="1" stroke-dasharray="2,1.5" fill="none"></rect></svg>
<div class="a" style="left:298px;top:16px;width:20px;height:15px;background:#d6d7d8;border-radius:3px"></div>
<div class="t" style="left:301px;top:18px;font-size:10px;color:#8a8a8a;font-weight:bold">H</div>
<div class="t" style="left:310px;top:19px;font-size:6px;color:#777">▾</div>
<svg class="a" style="left:325px;top:18px" width="14" height="14" viewBox="0 0 14 14"><path d="M3,10 L8.5,4.5" stroke="#6e6e6e" stroke-width="2.2" stroke-linecap="round"></path><path d="M11,10 V13 M9.5,11.5 H12.5" stroke="#6e6e6e" stroke-width="0.8"></path></svg>
<svg class="a" style="left:345px;top:18px" width="14" height="14" viewBox="0 0 14 14"><ellipse cx="6" cy="5.5" rx="4.8" ry="3.6" stroke="#6e6e6e" stroke-width="1.1" fill="none"></ellipse><path d="M3.5,8.5 L2.5,11 L5.5,9" stroke="#6e6e6e" stroke-width="0.9" fill="none"></path><path d="M11,10 V13 M9.5,11.5 H12.5" stroke="#6e6e6e" stroke-width="0.8"></path></svg>
<svg class="a" style="left:365px;top:18px" width="14" height="14" viewBox="0 0 14 14"><circle cx="6" cy="6" r="4.5" stroke="#6e6e6e" stroke-width="1.1" fill="none"></circle><path d="M11,10 V13 M9.5,11.5 H12.5" stroke="#6e6e6e" stroke-width="0.8"></path></svg>
<svg class="a" style="left:385px;top:18px" width="14" height="14" viewBox="0 0 14 14"><rect x="1.5" y="1.5" width="9" height="9" stroke="#6e6e6e" stroke-width="1.1" fill="none"></rect><path d="M11,10 V13 M9.5,11.5 H12.5" stroke="#6e6e6e" stroke-width="0.8"></path></svg>
<svg class="a" style="left:405px;top:18px" width="14" height="14" viewBox="0 0 14 14"><rect x="0" y="0" width="12" height="12" fill="#d0d0d0"></rect><text x="6" y="10" font-size="11" font-weight="bold" text-anchor="middle" fill="#8a8a8a" font-family="Liberation Sans">H</text><path d="M11,10 V13 M9.5,11.5 H12.5" stroke="#6e6e6e" stroke-width="0.8"></path></svg>
<svg class="a" style="left:425px;top:18px" width="14" height="14" viewBox="0 0 14 14"><path d="M3,1.5 V6.5 Q3,9 6,9 Q9,9 9,6.5 V1.5" stroke="#6e6e6e" stroke-width="1.1" fill="none"></path><path d="M1.5,11 H10.5" stroke="#6e6e6e" stroke-width="1"></path><path d="M11,10 V13 M9.5,11.5 H12.5" stroke="#6e6e6e" stroke-width="0.8"></path></svg>
<svg class="a" style="left:445px;top:18px" width="14" height="14" viewBox="0 0 14 14"><text x="6" y="10" font-size="11" text-anchor="middle" fill="#6e6e6e" font-family="Liberation Sans">S</text><path d="M1,6 H11" stroke="#6e6e6e" stroke-width="1"></path><path d="M11,10 V13 M9.5,11.5 H12.5" stroke="#6e6e6e" stroke-width="0.8"></path></svg>
<svg class="a" style="left:465px;top:18px" width="14" height="14" viewBox="0 0 14 14"><path d="M1,6 H10 M7,3.5 L10,6 L7,8.5" stroke="#6e6e6e" stroke-width="1.1" fill="none"></path><path d="M11,10 V13 M9.5,11.5 H12.5" stroke="#6e6e6e" stroke-width="0.8"></path></svg>
<svg class="a" style="left:485px;top:18px" width="14" height="14" viewBox="0 0 14 14"><path d="M2,9 Q4,11 6,8 Q8,3 10,4 M4,3 Q6,1 8,3" stroke="#6e6e6e" stroke-width="1.1" fill="none"></path><path d="M11,10 V13 M9.5,11.5 H12.5" stroke="#6e6e6e" stroke-width="0.8"></path></svg>
<div class="t" style="left:5px;top:33px;font-size:7.5px;color:#7a7a7a">Previous</div>
<div class="t" style="left:39px;top:33px;font-size:7.5px;color:#7a7a7a">Next</div>
<div class="t" style="left:68px;top:33px;font-size:7.5px;color:#7a7a7a">Page</div>
<div class="t" style="left:98px;top:33px;font-size:7.5px;color:#7a7a7a">Back</div>
<div class="t" style="left:119px;top:33px;font-size:7.5px;color:#b4b4b4">Forward</div>
<div class="t" style="left:173.5px;top:33px;font-size:7.5px;color:#7a7a7a">Zoom</div>
<div class="t" style="left:249.5px;top:33px;font-size:7.5px;color:#7a7a7a">Tool Mode</div>
<div class="t" style="left:395px;top:33px;font-size:7.5px;color:#7a7a7a">Add Note</div>
<div class="a" style="left:0;top:43px;width:544px;height:18px;background:#d3d4d5;border-top:1px solid #cacbcc;border-bottom:1px solid #c8c9ca"></div>
<div class="a" style="left:75.4px;top:44px;width:1px;height:16px;background:#c2c3c4"></div>
<div class="t" style="left:0.0px;top:47.5px;width:75.6px;text-align:center;font-size:7.5px;color:#6a6a6a">shortnotes...</div>
<div class="a" style="left:151.0px;top:44px;width:1px;height:16px;background:#c2c3c4"></div>
<div class="t" style="left:75.6px;top:47.5px;width:75.6px;text-align:center;font-size:7.5px;color:#6a6a6a">om-termin...</div>
<div class="a" style="left:226.6px;top:44px;width:1px;height:16px;background:#c2c3c4"></div>
<div class="t" style="left:151.2px;top:47.5px;width:75.6px;text-align:center;font-size:7.5px;color:#6a6a6a">shortslide...</div>
<div class="a" style="left:302.2px;top:44px;width:1px;height:16px;background:#c2c3c4"></div>
<div class="t" style="left:226.8px;top:47.5px;width:75.6px;text-align:center;font-size:7.5px;color:#6a6a6a">thgraph.e...</div>
<div class="a" style="left:377.8px;top:44px;width:1px;height:16px;background:#c2c3c4"></div>
<div class="t" style="left:302.4px;top:47.5px;width:75.6px;text-align:center;font-size:7.5px;color:#6a6a6a">inheritanc...</div>
<div class="a" style="left:453.4px;top:44px;width:1px;height:16px;background:#c2c3c4"></div>
<div class="t" style="left:378.0px;top:47.5px;width:75.6px;text-align:center;font-size:7.5px;color:#6a6a6a">oop-classi...</div>
<div class="a" style="left:452.5px;top:43px;width:74.5px;height:18px;background:#e3e4e5"></div>
<div class="t" style="left:452.5px;top:47.5px;width:74.5px;text-align:center;font-size:7.5px;color:#6a6a6a">slides-par...</div>
<div class="a" style="left:527px;top:43px;width:17px;height:18px;background:#d9dadb;border-left:1px solid #c8c9ca"></div>
<div class="t" style="left:530.5px;top:45px;font-size:10px;color:#888">+</div>
<div class="a" style="left:0;top:61px;width:156px;height:22px;background:#e3e4e5"></div>
<div class="a" style="left:7.7px;top:66px;width:16.7px;height:12px;background:#e8e9ea;border-radius:3px"></div>
<div class="a" style="left:14px;top:68px;width:3px;height:3px;border:1px solid #777"></div><div class="a" style="left:14px;top:73px;width:3px;height:3px;border:1px solid #777"></div>
<div class="a" style="left:24.4px;top:66px;width:19px;height:12px;background:#d6d7d8;border-radius:3px"></div>
<div class="a" style="left:30px;top:68.5px;width:8px;height:1px;background:#777"></div>
<div class="a" style="left:30px;top:70.5px;width:8px;height:1px;background:#777"></div>
<div class="a" style="left:30px;top:72.5px;width:8px;height:1px;background:#777"></div>
<div class="a" style="left:30px;top:74.5px;width:8px;height:1px;background:#777"></div>
<div class="a" style="left:49px;top:66px;width:101.4px;height:12px;background:#d9dadb;border-radius:4px"></div>
<svg class="a" style="left:51px;top:67px" width="14" height="10" viewBox="0 0 14 10"><circle cx="4.5" cy="4.5" r="3.2" stroke="#555" stroke-width="1.1" fill="none"></circle><path d="M7,7 L9,9" stroke="#555" stroke-width="1.2"></path><path d="M10,4 L11.5,5.5 L13,4" stroke="#555" stroke-width="0.9" fill="none"></path></svg>
<div class="t" style="left:65px;top:67px;font-size:8.5px;color:#b0b0b0">Search</div>
<div class="a" style="left:0;top:83px;width:156px;height:461px;background:#d9dcdd"></div>
<div class="a" style="left:156px;top:61px;width:1px;height:483px;background:#cfd0d1"></div>
<div class="a" style="left:6.6px;top:421px;width:143px;height:11px;background:#c6c7c8;border-radius:4px"></div>
<div class="t" style="left:34.5px;top:84.55px;font-size:7.8px;line-height:10px;color:#505050">3.2.3 Soundness and Te...</div>
<div class="t" style="left:125px;width:20.5px;text-align:right;top:84.55px;font-size:7.8px;line-height:10px;color:#505050">61</div>
<svg class="a" style="left:17.5px;top:98.32px" width="6" height="5" viewBox="0 0 6 5"><path d="M0.8,1 L3,3.8 L5.2,1" stroke="#666" stroke-width="0.9" fill="none"></path></svg>
<div class="t" style="left:25.7px;top:95.82px;font-size:7.8px;line-height:10px;color:#505050">3.3 Resolution for Proposit...</div>
<div class="t" style="left:125px;width:20.5px;text-align:right;top:95.82px;font-size:7.8px;line-height:10px;color:#505050">63</div>
<div class="t" style="left:34.5px;top:107.09px;font-size:7.8px;line-height:10px;color:#505050">3.3.1 Resolution for Pro...</div>
<div class="t" style="left:125px;width:20.5px;text-align:right;top:107.09px;font-size:7.8px;line-height:10px;color:#505050">63</div>
<div class="t" style="left:34.5px;top:118.36px;font-size:7.8px;line-height:10px;color:#505050">3.3.2 Killing a Wumpus...</div>
<div class="t" style="left:125px;width:20.5px;text-align:right;top:118.36px;font-size:7.8px;line-height:10px;color:#505050">68</div>
<div class="t" style="left:25.7px;top:129.63px;font-size:7.8px;line-height:10px;color:#505050">3.4 Conclusion</div>
<div class="t" style="left:125px;width:20.5px;text-align:right;top:129.63px;font-size:7.8px;line-height:10px;color:#505050">73</div>
<svg class="a" style="left:8.600000000000001px;top:143.40px" width="6" height="5" viewBox="0 0 6 5"><path d="M0.8,1 L3,3.8 L5.2,1" stroke="#666" stroke-width="0.9" fill="none"></path></svg>
<div class="t" style="left:16.8px;top:140.90px;font-size:7.8px;line-height:10px;color:#505050">4 Propositional Reasoning: S...</div>
<div class="t" style="left:125px;width:20.5px;text-align:right;top:140.90px;font-size:7.8px;line-height:10px;color:#505050">74</div>
<div class="t" style="left:25.7px;top:152.17px;font-size:7.8px;line-height:10px;color:#505050">4.1 Introduction</div>
<div class="t" style="left:125px;width:20.5px;text-align:right;top:152.17px;font-size:7.8px;line-height:10px;color:#505050">74</div>
<div class="t" style="left:25.7px;top:163.44px;font-size:7.8px;line-height:10px;color:#505050">4.2 The Davis-Putnam (Lo...</div>
<div class="t" style="left:125px;width:20.5px;text-align:right;top:163.44px;font-size:7.8px;line-height:10px;color:#505050">79</div>
<div class="t" style="left:25.7px;top:174.71px;font-size:7.8px;line-height:10px;color:#505050">4.3 DPLL ="0362= (A Rest...</div>
<div class="t" style="left:125px;width:20.5px;text-align:right;top:174.71px;font-size:7.8px;line-height:10px;color:#505050">84</div>
<div class="t" style="left:25.7px;top:185.98px;font-size:7.8px;line-height:10px;color:#505050">4.4 Conclusion</div>
<div class="t" style="left:125px;width:20.5px;text-align:right;top:185.98px;font-size:7.8px;line-height:10px;color:#505050">88</div>
<svg class="a" style="left:8.600000000000001px;top:199.75px" width="6" height="5" viewBox="0 0 6 5"><path d="M0.8,1 L3,3.8 L5.2,1" stroke="#666" stroke-width="0.9" fill="none"></path></svg>
<div class="t" style="left:16.8px;top:197.25px;font-size:7.8px;line-height:10px;color:#505050">5 First-Order Predicate Logic</div>
<div class="t" style="left:125px;width:20.5px;text-align:right;top:197.25px;font-size:7.8px;line-height:10px;color:#505050">92</div>
<div class="t" style="left:25.7px;top:208.52px;font-size:7.8px;line-height:10px;color:#505050">5.1 Motivation: A more Exp...</div>
<div class="t" style="left:125px;width:20.5px;text-align:right;top:208.52px;font-size:7.8px;line-height:10px;color:#505050">92</div>
<svg class="a" style="left:17.5px;top:222.29px" width="6" height="5" viewBox="0 0 6 5"><path d="M0.8,1 L3,3.8 L5.2,1" stroke="#666" stroke-width="0.9" fill="none"></path></svg>
<div class="t" style="left:25.7px;top:219.79px;font-size:7.8px;line-height:10px;color:#505050">5.2 First-Order Logic</div>
<div class="t" style="left:125px;width:20.5px;text-align:right;top:219.79px;font-size:7.8px;line-height:10px;color:#505050">98</div>
<div class="t" style="left:34.5px;top:231.06px;font-size:7.8px;line-height:10px;color:#505050">5.2.1 First-Order Logic:...</div>
<div class="t" style="left:125px;width:20.5px;text-align:right;top:231.06px;font-size:7.8px;line-height:10px;color:#505050">99</div>
<div class="t" style="left:34.5px;top:242.33px;font-size:7.8px;line-height:10px;color:#505050">5.2.2 First-Order Substi...</div>
<div class="t" style="left:125px;width:20.5px;text-align:right;top:242.33px;font-size:7.8px;line-height:10px;color:#505050">106</div>
<div class="t" style="left:25.7px;top:253.60px;font-size:7.8px;line-height:10px;color:#505050">5.3 First-Order Natural De...</div>
<div class="t" style="left:125px;width:20.5px;text-align:right;top:253.60px;font-size:7.8px;line-height:10px;color:#505050">111</div>
<div class="t" style="left:25.7px;top:264.87px;font-size:7.8px;line-height:10px;color:#505050">5.4 Conclusion</div>
<div class="t" style="left:125px;width:20.5px;text-align:right;top:264.87px;font-size:7.8px;line-height:10px;color:#505050">118</div>
<svg class="a" style="left:8.600000000000001px;top:278.64px" width="6" height="5" viewBox="0 0 6 5"><path d="M0.8,1 L3,3.8 L5.2,1" stroke="#666" stroke-width="0.9" fill="none"></path></svg>
<div class="t" style="left:16.8px;top:276.14px;font-size:7.8px;line-height:10px;color:#505050">6 Automated Theorem Provin...</div>
<div class="t" style="left:125px;width:20.5px;text-align:right;top:276.14px;font-size:7.8px;line-height:10px;color:#505050">120</div>
<svg class="a" style="left:17.5px;top:289.91px" width="6" height="5" viewBox="0 0 6 5"><path d="M0.8,1 L3,3.8 L5.2,1" stroke="#666" stroke-width="0.9" fill="none"></path></svg>
<div class="t" style="left:25.7px;top:287.41px;font-size:7.8px;line-height:10px;color:#505050">6.1 First-Order Inference w...</div>
<div class="t" style="left:125px;width:20.5px;text-align:right;top:287.41px;font-size:7.8px;line-height:10px;color:#505050">120</div>
<div class="t" style="left:34.5px;top:298.68px;font-size:7.8px;line-height:10px;color:#505050">6.1.1 First-Order Tablea...</div>
<div class="t" style="left:125px;width:20.5px;text-align:right;top:298.68px;font-size:7.8px;line-height:10px;color:#505050">120</div>
<div class="t" style="left:34.5px;top:309.95px;font-size:7.8px;line-height:10px;color:#505050">6.1.2 First-Order Unifica...</div>
<div class="t" style="left:125px;width:20.5px;text-align:right;top:309.95px;font-size:7.8px;line-height:10px;color:#505050">127</div>
<div class="t" style="left:34.5px;top:321.22px;font-size:7.8px;line-height:10px;color:#505050">6.1.3 Efficient Unification</div>
<div class="t" style="left:125px;width:20.5px;text-align:right;top:321.22px;font-size:7.8px;line-height:10px;color:#505050">134</div>
<div class="t" style="left:34.5px;top:332.49px;font-size:7.8px;line-height:10px;color:#505050">6.1.4 Implementing First...</div>
<div class="t" style="left:125px;width:20.5px;text-align:right;top:332.49px;font-size:7.8px;line-height:10px;color:#505050">140</div>
<svg class="a" style="left:17.5px;top:346.26px" width="6" height="5" viewBox="0 0 6 5"><path d="M0.8,1 L3,3.8 L5.2,1" stroke="#666" stroke-width="0.9" fill="none"></path></svg>
<div class="t" style="left:25.7px;top:343.76px;font-size:7.8px;line-height:10px;color:#505050">6.2 First-Order Resolution</div>
<div class="t" style="left:125px;width:20.5px;text-align:right;top:343.76px;font-size:7.8px;line-height:10px;color:#505050">143</div>
<div class="t" style="left:34.5px;top:355.03px;font-size:7.8px;line-height:10px;color:#505050">6.2.1 Resolution Examples</div>
<div class="t" style="left:125px;width:20.5px;text-align:right;top:355.03px;font-size:7.8px;line-height:10px;color:#505050">145</div>
<div class="t" style="left:25.7px;top:366.30px;font-size:7.8px;line-height:10px;color:#505050">6.3 Logic Programming as...</div>
<div class="t" style="left:125px;width:20.5px;text-align:right;top:366.30px;font-size:7.8px;line-height:10px;color:#505050">151</div>
<div class="t" style="left:25.7px;top:377.57px;font-size:7.8px;line-height:10px;color:#505050">6.4 Summary: ATP in First-...</div>
<div class="t" style="left:125px;width:20.5px;text-align:right;top:377.57px;font-size:7.8px;line-height:10px;color:#505050">157</div>
<svg class="a" style="left:8.600000000000001px;top:391.34px" width="6" height="5" viewBox="0 0 6 5"><path d="M0.8,1 L3,3.8 L5.2,1" stroke="#666" stroke-width="0.9" fill="none"></path></svg>
<div class="t" style="left:16.8px;top:388.84px;font-size:7.8px;line-height:10px;color:#505050">7 Knowledge Representation...</div>
<div class="t" style="left:125px;width:20.5px;text-align:right;top:388.84px;font-size:7.8px;line-height:10px;color:#505050">158</div>
<svg class="a" style="left:17.5px;top:402.61px" width="6" height="5" viewBox="0 0 6 5"><path d="M0.8,1 L3,3.8 L5.2,1" stroke="#666" stroke-width="0.9" fill="none"></path></svg>
<div class="t" style="left:25.7px;top:400.11px;font-size:7.8px;line-height:10px;color:#505050">7.1 Introduction to Knowle...</div>
<div class="t" style="left:125px;width:20.5px;text-align:right;top:400.11px;font-size:7.8px;line-height:10px;color:#505050">158</div>
<div class="t" style="left:34.5px;top:411.38px;font-size:7.8px;line-height:10px;color:#505050">7.1.1 Knowledge &amp; Repre...</div>
<div class="t" style="left:125px;width:20.5px;text-align:right;top:411.38px;font-size:7.8px;line-height:10px;color:#505050">158</div>
<div class="t" style="left:34.5px;top:422.65px;font-size:7.8px;line-height:10px;color:#505050">7.1.2 Semantic Networks</div>
<div class="t" style="left:125px;width:20.5px;text-align:right;top:422.65px;font-size:7.8px;line-height:10px;color:#505050">162</div>
<div class="t" style="left:34.5px;top:433.92px;font-size:7.8px;line-height:10px;color:#505050">7.1.3 The Semantic Web</div>
<div class="t" style="left:125px;width:20.5px;text-align:right;top:433.92px;font-size:7.8px;line-height:10px;color:#505050">169</div>
<div class="t" style="left:34.5px;top:445.19px;font-size:7.8px;line-height:10px;color:#505050">7.1.4 Other Knowledge R...</div>
<div class="t" style="left:125px;width:20.5px;text-align:right;top:445.19px;font-size:7.8px;line-height:10px;color:#505050">178</div>
<svg class="a" style="left:17.5px;top:458.96px" width="6" height="5" viewBox="0 0 6 5"><path d="M0.8,1 L3,3.8 L5.2,1" stroke="#666" stroke-width="0.9" fill="none"></path></svg>
<div class="t" style="left:25.7px;top:456.46px;font-size:7.8px;line-height:10px;color:#505050">7.2 Logic-Based Knowledg...</div>
<div class="t" style="left:125px;width:20.5px;text-align:right;top:456.46px;font-size:7.8px;line-height:10px;color:#505050">181</div>
<div class="t" style="left:34.5px;top:467.73px;font-size:7.8px;line-height:10px;color:#505050">7.2.1 Propositional Logic...</div>
<div class="t" style="left:125px;width:20.5px;text-align:right;top:467.73px;font-size:7.8px;line-height:10px;color:#505050">182</div>
<div class="t" style="left:34.5px;top:479.00px;font-size:7.8px;line-height:10px;color:#505050">7.2.2 Ontologies and De...</div>
<div class="t" style="left:125px;width:20.5px;text-align:right;top:479.00px;font-size:7.8px;line-height:10px;color:#505050">188</div>
<div class="t" style="left:34.5px;top:490.27px;font-size:7.8px;line-height:10px;color:#505050">7.2.3 Description Logics...</div>
<div class="t" style="left:125px;width:20.5px;text-align:right;top:490.27px;font-size:7.8px;line-height:10px;color:#505050">191</div>
<svg class="a" style="left:17.5px;top:504.04px" width="6" height="5" viewBox="0 0 6 5"><path d="M0.8,1 L3,3.8 L5.2,1" stroke="#666" stroke-width="0.9" fill="none"></path></svg>
<div class="t" style="left:25.7px;top:501.54px;font-size:7.8px;line-height:10px;color:#505050">7.3 A simple Description L...</div>
<div class="t" style="left:125px;width:20.5px;text-align:right;top:501.54px;font-size:7.8px;line-height:10px;color:#505050">196</div>
<div class="t" style="left:34.5px;top:512.81px;font-size:7.8px;line-height:10px;color:#505050">7.3.1 Basic ALC: Concep...</div>
<div class="t" style="left:125px;width:20.5px;text-align:right;top:512.81px;font-size:7.8px;line-height:10px;color:#505050">196</div>
<div class="t" style="left:34.5px;top:524.08px;font-size:7.8px;line-height:10px;color:#505050">7.3.2 Inference for ALC</div>
<div class="t" style="left:125px;width:20.5px;text-align:right;top:524.08px;font-size:7.8px;line-height:10px;color:#505050">206</div>
<div class="t" style="left:34.5px;top:535.35px;font-size:7.8px;line-height:10px;color:#505050">7.3.3 ABoxes, Instance T...</div>
<div class="t" style="left:125px;width:20.5px;text-align:right;top:535.35px;font-size:7.8px;line-height:10px;color:#505050">219</div>
<div class="a" style="left:157px;top:61px;width:387px;height:22px;background:#e3e4e5"></div>
<div class="a" style="left:205.6px;top:66px;width:270px;height:12px;background:#d9dadb;border-radius:4px"></div>
<svg class="a" style="left:207px;top:67px" width="14" height="10" viewBox="0 0 14 10"><circle cx="4.5" cy="4.5" r="3.2" stroke="#555" stroke-width="1.1" fill="none"></circle><path d="M7,7 L9,9" stroke="#555" stroke-width="1.2"></path><path d="M10,4 L11.5,5.5 L13,4" stroke="#555" stroke-width="0.9" fill="none"></path></svg>
<div class="t" style="left:222px;top:66.5px;font-size:9px;color:#333">tbox</div>
<div class="a" style="left:461px;top:68px;width:8px;height:8px;border-radius:50%;background:#333"></div>
<div class="a" style="left:480px;top:66px;width:27px;height:12px;border:1px solid #c4c4c4;border-radius:3px;background:#e9e9e9"></div>
<div class="a" style="left:493.5px;top:66px;width:1px;height:12px;background:#c4c4c4"></div>
<svg class="a" style="left:484px;top:68px" width="6" height="8" viewBox="0 0 6 8"><path d="M4.5,1 L1.5,4 L4.5,7" stroke="#444" stroke-width="1" fill="none"></path></svg>
<svg class="a" style="left:498px;top:68px" width="6" height="8" viewBox="0 0 6 8"><path d="M1.5,1 L4.5,4 L1.5,7" stroke="#444" stroke-width="1" fill="none"></path></svg>
<div class="a" style="left:512px;top:66px;width:27px;height:12px;border:1px solid #c4c4c4;border-radius:3px;background:#e9e9e9"></div>
<div class="t" style="left:516px;top:67px;font-size:8.5px;color:#333">Done</div>
<div class="a" style="left:157px;top:83px;width:387px;height:461px;background:#d5d8d9;overflow:hidden">
<div class="a" style="left:52px;top:0.3px;width:283px;height:69.5px;background:#ececec;overflow:hidden"><svg class="a" style="left:0;top:0" width="283" height="70" viewBox="0 0 283 70"><g stroke="#444" stroke-width="0.6" fill="none"><path d="M103.6,15 V38.5"></path><path d="M125,23 L110,15"></path><path d="M147,15 L135,22.7"></path><path d="M160,38.7 L154,15"></path><path d="M165,38.7 L180,15"></path><path d="M168.7,43 L184,30.7"></path><path d="M187,21.7 L183,15"></path></g><path d="M110.8,10.5 H145.5" stroke="#e06070" stroke-width="0.8" stroke-dasharray="1.5,1" fill="none"></path><path d="M154,15 Q140,42 113,45" stroke="#3040c0" stroke-width="0.7" fill="none"></path><path d="M125,31 L110,39" stroke="#3040c0" stroke-width="0.7" fill="none"></path><rect x="96.5" y="6" width="14.3" height="9" rx="1.8" fill="#f2f2f2" stroke="#555" stroke-width="0.7"></rect><text x="103.65" y="12.7" font-size="6" text-anchor="middle" fill="#333" font-family="Liberation Sans">bird</text><rect x="145.5" y="6" width="16" height="9" rx="1.8" fill="#f2f2f2" stroke="#555" stroke-width="0.7"></rect><text x="153.5" y="12.7" font-size="6" text-anchor="middle" fill="#333" font-family="Liberation Sans">Jack</text><rect x="171" y="6" width="21.7" height="9" rx="1.8" fill="#f2f2f2" stroke="#555" stroke-width="0.7"></rect><text x="181.85" y="12.7" font-size="6" text-anchor="middle" fill="#333" font-family="Liberation Sans">Person</text><rect x="123.6" y="22.7" width="16.7" height="8.5" rx="1.8" fill="#f2f2f2" stroke="#555" stroke-width="0.7"></rect><text x="131.95" y="28.9" font-size="6" text-anchor="middle" fill="#333" font-family="Liberation Sans">robin</text><rect x="180.3" y="21.7" width="17.4" height="9" rx="1.8" fill="#f2f2f2" stroke="#555" stroke-width="0.7"></rect><text x="189.0" y="28.4" font-size="6" text-anchor="middle" fill="#333" font-family="Liberation Sans">Mary</text><rect x="94" y="38.5" width="19" height="8.5" rx="1.8" fill="#f2f2f2" stroke="#555" stroke-width="0.7"></rect><text x="103.5" y="44.7" font-size="6" text-anchor="middle" fill="#333" font-family="Liberation Sans">wings</text><rect x="152" y="38.7" width="16.7" height="8.5" rx="1.8" fill="#f2f2f2" stroke="#555" stroke-width="0.7"></rect><text x="160.35" y="44.900000000000006" font-size="6" text-anchor="middle" fill="#333" font-family="Liberation Sans">John</text><text x="86" y="27" font-size="4.5" fill="#444" font-family="Liberation Sans">has_part</text><text x="113" y="18" font-size="4.5" fill="#444" font-family="Liberation Sans">isa</text><text x="142" y="17" font-size="4.5" fill="#444" font-family="Liberation Sans">inst</text><text x="145" y="27" font-size="4.5" fill="#444" font-family="Liberation Sans">member_of</text><text x="160" y="22" font-size="4.5" fill="#444" font-family="Liberation Sans">inst</text><text x="188" y="20" font-size="4.5" fill="#444" font-family="Liberation Sans">inst</text><text x="172" y="40" font-size="4.5" fill="#444" font-family="Liberation Sans">loves</text><text x="112" y="34" font-size="4.5" fill="#3040c0" font-family="Liberation Sans">has_part</text><text x="130" y="42" font-size="4.5" fill="#3040c0" font-family="Liberation Sans">has_part</text><text x="128" y="9" font-size="4.5" fill="#d04050" font-family="Liberation Sans">isa</text></svg><svg class="a" style="left:5.8px;top:53.10px" width="4" height="4" viewBox="0 0 4 4"><path d="M0,0 L4,2 L0,4 Z" fill="#203c9c"></path></svg><div class="t" style="left: 13px; top: 51.3px; font-size: 6.2px; line-height: 7.6px; -webkit-text-stroke: 0.08px; transform: scaleX(0.9619); transform-origin: 0px 0px;"><span style="color:#1f36b8;font-weight:bold;">Slogan:</span><span style="color:#2a2a2a;">&nbsp; Get out more knowledge from a </span><span style="color:#4a6cc4;">semantic networks</span><span style="color:#2a2a2a;"> than you put in.</span></div><div class="t" style="left:6px;top:62.5px;font-size:7px;line-height:8px;color:#555;letter-spacing:-0.5px">FAU</div><div class="a" style="left:36px;top:66.50px;width:69px;height:1px;background:#8090c8"></div><div class="a" style="left:162px;top:66.50px;width:8px;height:1px;background:#8090c8"></div><div class="a" style="left:226px;top:66.50px;width:18px;height:1px;background:#8090c8"></div><div class="a" style="left:262px;top:63.50px;width:16px;height:5px;border-top:1.5px solid #444;border-bottom:1.5px solid #444;background:repeating-linear-gradient(90deg,#444 0 1px,#ddd 1px 3px)"></div></div>
<div class="a" style="left:52px;top:76.2px;width:283px;height:158.8px;background:#ececec;overflow:hidden"><div class="t" style="left: 5.3px; top: 2.6px; font-size: 9px; line-height: 11px; color: rgb(51, 80, 158); transform: scaleX(0.8889); transform-origin: 0px 0px;">Terminologies and Assertions</div><div class="a" style="left:5px;top:13.10px;width:278px;height:1px;background:#7f8fd0"></div><svg class="a" style="left:7px;top:23.00px" width="4" height="4" viewBox="0 0 4 4"><path d="M0,0 L4,2 L0,4 Z" fill="#203c9c"></path></svg><div class="t" style="left: 13px; top: 21.2px; font-size: 6.2px; line-height: 7.6px; -webkit-text-stroke: 0.08px; transform: scaleX(0.9497); transform-origin: 0px 0px;"><span style="color:#2a2a2a;font-style:italic;">Remark 1.9.</span><span style="color:#2a2a2a;"> We should distinguish </span><span style="color:#4a6cc4;">concepts</span><span style="color:#2a2a2a;"> from </span><span style="color:#4a6cc4;">objects.</span></div><svg class="a" style="left:7px;top:32.40px" width="4" height="4" viewBox="0 0 4 4"><path d="M0,0 L4,2 L0,4 Z" fill="#203c9c"></path></svg><div class="t" style="left: 13px; top: 30.6px; font-size: 6.2px; line-height: 7.6px; -webkit-text-stroke: 0.08px; transform: scaleX(0.9683); transform-origin: 0px 0px;"><span style="color:#2a2a2a;font-weight:bold;">Definition 1.10.</span><span style="color:#2a2a2a;"> We call the </span><span style="color:#4a6cc4;">subgraph</span><span style="color:#2a2a2a;"> of a </span><span style="color:#4a6cc4;">semantic network</span><span style="color:#2a2a2a;"> <i>N</i> spanned by the </span><span style="color:#4a6cc4;">isa links</span><span style="color:#2a2a2a;"> and</span></div><div class="t" style="left: 10.7px; top: 38px; font-size: 6.2px; line-height: 7.6px; -webkit-text-stroke: 0.08px; transform: scaleX(0.96); transform-origin: 0px 0px;"><span style="color:#4a6cc4;">relations</span><span style="color:#2a2a2a;"> between </span><span style="color:#4a6cc4;">concepts</span><span style="color:#2a2a2a;"> the </span><span style="color:#d0304a;">terminology</span><span style="color:#2a2a2a;"> (or </span><span style="color:#d0304a;">TBox</span><span style="color:#2a2a2a;">, or the famous </span><span style="color:#d0304a;">isa Hierarchy</span><span style="color:#2a2a2a;">) and the </span><span style="color:#4a6cc4;">subgraph</span></div><div class="t" style="left: 10.7px; top: 45.7px; font-size: 6.2px; line-height: 7.6px; -webkit-text-stroke: 0.08px; transform: scaleX(0.962); transform-origin: 0px 0px;"><span style="color:#2a2a2a;">spanned by the </span><span style="color:#4a6cc4;">inst links</span><span style="color:#2a2a2a;"> and </span><span style="color:#4a6cc4;">relations</span><span style="color:#2a2a2a;"> between objects, the </span><span style="color:#d0304a;">assertions</span><span style="color:#2a2a2a;"> (together the </span><span style="color:#d0304a;">ABox</span><span style="color:#2a2a2a;">) of <i>N</i>.</span></div><svg class="a" style="left:7px;top:56.80px" width="4" height="4" viewBox="0 0 4 4"><path d="M0,0 L4,2 L0,4 Z" fill="#203c9c"></path></svg><div class="t" style="left: 13px; top: 55px; font-size: 6.2px; line-height: 7.6px; -webkit-text-stroke: 0.08px; transform: scaleX(0.9607); transform-origin: 0px 0px;"><span style="color:#2a2a2a;font-weight:bold;">Example 1.11.</span><span style="color:#2a2a2a;"> In this </span><span style="color:#4a6cc4;">semantic network</span><span style="color:#2a2a2a;"> we keep </span><span style="color:#4a6cc4;">objects concept</span><span style="color:#2a2a2a;"> apart notationally:</span></div><svg class="a" style="left:0;top:0" width="283" height="159" viewBox="0 0 283 159"><g stroke="#333" stroke-width="0.6" fill="none"><path d="M136,68.6 H157"></path><path d="M134,91.2 L150.4,86.4"></path><path d="M176.4,86.4 L186,91.2"></path><path d="M127.3,102.9 H142"></path><path d="M151.4,102.9 H160.4"></path><path d="M177.8,102.9 H186.4"></path></g><g stroke="#3a9a3a" stroke-width="0.6" fill="none"><path d="M126.9,71.3 L119.6,76.5"></path><path d="M134,70.7 L156.2,82.3"></path><path d="M159,89 L148.4,99.6"></path><path d="M164.9,89 L168.7,99.6"></path></g><rect x="121.9" y="65.9" width="14.1" height="5.4" rx="1.6" fill="#f0f0f0" stroke="#444" stroke-width="0.6"></rect><text x="128.9" y="69.7" font-size="4.2" text-anchor="middle" fill="#333" font-family="Liberation Sans">animal</text><rect x="157" y="66.3" width="12.7" height="4.8" rx="1.6" fill="#f0f0f0" stroke="#444" stroke-width="0.6"></rect><text x="163.3" y="69.5" font-size="4.2" text-anchor="middle" fill="#333" font-family="Liberation Sans">move</text><rect x="113" y="77" width="16.0" height="6.0" rx="1.6" fill="#f0f0f0" stroke="#444" stroke-width="0.6"></rect><text x="121.0" y="81.4" font-size="4.2" text-anchor="middle" fill="#333" font-family="Liberation Sans">amoeba</text><rect x="150.4" y="82.3" width="26.0" height="6.7" rx="1.6" fill="#f0f0f0" stroke="#444" stroke-width="0.6"></rect><text x="163.4" y="87.4" font-size="4.2" text-anchor="middle" fill="#333" font-family="Liberation Sans">higher animal</text><rect x="124.4" y="88" width="9.6" height="7.0" rx="1.6" fill="#f0f0f0" stroke="#444" stroke-width="0.6"></rect><text x="129.2" y="93.4" font-size="4.2" text-anchor="middle" fill="#333" font-family="Liberation Sans">legs</text><rect x="186" y="88" width="11.6" height="7.0" rx="1.6" fill="#f0f0f0" stroke="#444" stroke-width="0.6"></rect><text x="191.8" y="93.4" font-size="4.2" text-anchor="middle" fill="#333" font-family="Liberation Sans">head</text><rect x="111.9" y="99.6" width="15.4" height="6.8" rx="1.6" fill="#f0f0f0" stroke="#444" stroke-width="0.6"></rect><text x="119.6" y="104.8" font-size="4.2" text-anchor="middle" fill="#333" font-family="Liberation Sans">striped</text><rect x="142" y="99.6" width="9.4" height="6.8" rx="1.6" fill="#f0f0f0" stroke="#444" stroke-width="0.6"></rect><text x="146.7" y="104.8" font-size="4.2" text-anchor="middle" fill="#333" font-family="Liberation Sans">tiger</text><rect x="160.4" y="99.6" width="17.4" height="6.8" rx="1.6" fill="#f0f0f0" stroke="#444" stroke-width="0.6"></rect><text x="169.1" y="104.8" font-size="4.2" text-anchor="middle" fill="#333" font-family="Liberation Sans">elephant</text><rect x="186.4" y="99.6" width="10.8" height="6.8" rx="1.6" fill="#f0f0f0" stroke="#444" stroke-width="0.6"></rect><text x="191.8" y="104.8" font-size="4.2" text-anchor="middle" fill="#333" font-family="Liberation Sans">gray</text><g font-family="Liberation Sans" font-size="3.6" fill="#444"><text x="144" y="66.5">can</text><text x="138" y="85.5">has_part</text><text x="178" y="85.5">has_part</text><text x="129.5" y="101.5">pattern</text><text x="153" y="101.5">size</text><text x="179.5" y="101.5">color</text></g><path d="M94.5,108.7 H197.6" stroke="#444" stroke-width="0.7" stroke-dasharray="0.8,1"></path><g font-family="Liberation Sans" font-size="4.5" font-weight="bold" fill="#2a40c8"><text x="95.5" y="76">TBox</text><text x="95.5" y="122">ABox</text></g><g font-family="Liberation Sans" font-size="4.5" fill="#333"><text x="112.5" y="122">Roy</text><text x="134.7" y="122">Rex</text><text x="155.9" y="122">Clyde</text></g><g font-family="Liberation Sans" font-size="3.4" fill="#d03040"><text x="136" y="113">inst</text><text x="149" y="113">inst</text><text x="163.5" y="113">inst</text></g><text x="174" y="113" font-family="Liberation Sans" font-size="3.4" fill="#3040c0">color</text><path d="M118,121 Q130,126 135,121 M141,121 Q148,125 155,121 M166,120 Q175,116 180,111" stroke="#999" stroke-width="0.4" fill="none"></path></svg><div class="t" style="left: 10.7px; top: 128.6px; font-size: 6.2px; line-height: 7.6px; -webkit-text-stroke: 0.08px; transform: scaleX(0.9568); transform-origin: 0px 0px;"><span style="color:#2a2a2a;">In particular we have </span><span style="color:#4a6cc4;">objects</span><span style="color:#2a2a2a;"> "Rex", "Roy", and "Clyde", which have (derived) </span><span style="color:#4a6cc4;">relations</span><span style="color:#2a2a2a;"> (e.g. "</span><span style="color:#3a9a3a;font-style:italic;">Clyde</span><span style="color:#2a2a2a;">" is</span></div><div class="t" style="left: 10.7px; top: 136.6px; font-size: 6.2px; line-height: 7.6px; -webkit-text-stroke: 0.08px; transform: scaleX(0.95); transform-origin: 0px 0px;"><span style="color:#2a2a2a;">"</span><span style="color:#3a9a3a;font-style:italic;">gray</span><span style="color:#2a2a2a;">").</span></div><div class="t" style="left:6px;top:152px;font-size:7px;line-height:8px;color:#555;letter-spacing:-0.5px">FAU</div><div class="a" style="left:36px;top:156.00px;width:69px;height:1px;background:#8090c8"></div><div class="a" style="left:162px;top:156.00px;width:8px;height:1px;background:#8090c8"></div><div class="a" style="left:226px;top:156.00px;width:18px;height:1px;background:#8090c8"></div><div class="a" style="left:262px;top:153.00px;width:16px;height:5px;border-top:1.5px solid #444;border-bottom:1.5px solid #444;background:repeating-linear-gradient(90deg,#444 0 1px,#ddd 1px 3px)"></div></div>
<div class="a" style="left:52px;top:240.8px;width:283px;height:159.2px;background:#ececec;overflow:hidden"><div class="t" style="left: 5.3px; top: 3.1px; font-size: 9px; line-height: 11px; color: rgb(51, 80, 158); transform: scaleX(0.9023); transform-origin: 0px 0px;">Limitations of Semantic Networks</div><div class="a" style="left:5px;top:13.60px;width:278px;height:1px;background:#7f8fd0"></div><svg class="a" style="left:6.5px;top:36.90px" width="4" height="4" viewBox="0 0 4 4"><path d="M0,0 L4,2 L0,4 Z" fill="#203c9c"></path></svg><div class="t" style="left: 12.6px; top: 35.1px; font-size: 6.2px; line-height: 7.6px; -webkit-text-stroke: 0.08px; transform: scaleX(0.9759); transform-origin: 0px 0px;"><span style="color:#2a2a2a;">What is the </span><span style="color:#4a6cc4;">meaning</span><span style="color:#2a2a2a;"> of a </span><span style="color:#4a6cc4;">link</span><span style="color:#2a2a2a;">?</span></div><svg class="a" style="left:13.5px;top:45.90px" width="3.2" height="3.2" viewBox="0 0 4 4"><path d="M0,0 L4,2 L0,4 Z" fill="#203c9c"></path></svg><div class="t" style="left: 18.6px; top: 43.7px; font-size: 5.6px; line-height: 7.6px; -webkit-text-stroke: 0.08px; transform: scaleX(0.9467); transform-origin: 0px 0px;"><span style="color:#4a6cc4;">link</span><span style="color:#2a2a2a;"> labels are very suggestive</span></div><div class="t" style="left:auto;right:5.5px;top:43.70px;font-size:5.6px;line-height:7.6px;-webkit-text-stroke:0.08px"><span style="color:#3a9a3a;">(misleading for humans)</span></div><svg class="a" style="left:13.5px;top:52.80px" width="3.2" height="3.2" viewBox="0 0 4 4"><path d="M0,0 L4,2 L0,4 Z" fill="#203c9c"></path></svg><div class="t" style="left: 18.6px; top: 50.6px; font-size: 5.6px; line-height: 7.6px; -webkit-text-stroke: 0.08px; transform: scaleX(0.9683); transform-origin: 0px 0px;"><span style="color:#4a6cc4;">meaning</span><span style="color:#2a2a2a;"> of </span><span style="color:#4a6cc4;">link</span><span style="color:#2a2a2a;"> types defined in the process model</span></div><div class="t" style="left:auto;right:5.5px;top:50.60px;font-size:5.6px;line-height:7.6px;-webkit-text-stroke:0.08px"><span style="color:#3a9a3a;">(no denotational semantics)</span></div><svg class="a" style="left:6.5px;top:61.60px" width="4" height="4" viewBox="0 0 4 4"><path d="M0,0 L4,2 L0,4 Z" fill="#203c9c"></path></svg><div class="t" style="left: 12.6px; top: 59.8px; font-size: 6.2px; line-height: 7.6px; -webkit-text-stroke: 0.08px; transform: scaleX(0.9867); transform-origin: 0px 0px;"><span style="color:#1f36b8;font-weight:bold;">Problem:</span><span style="color:#2a2a2a;">&nbsp; No distinction of optional and defining traits!</span></div><svg class="a" style="left:6.5px;top:70.90px" width="4" height="4" viewBox="0 0 4 4"><path d="M0,0 L4,2 L0,4 Z" fill="#203c9c"></path></svg><div class="t" style="left: 12.6px; top: 69.1px; font-size: 6.2px; line-height: 7.6px; -webkit-text-stroke: 0.08px; transform: scaleX(0.9737); transform-origin: 0px 0px;"><span style="color:#2a2a2a;font-weight:bold;">Example 1.12.</span><span style="color:#2a2a2a;"> Consider a robin that has lost its wings in an accident:</span></div><svg class="a" style="left:0;top:0" width="283" height="160" viewBox="0 0 283 160"><g transform="translate(0,0)" font-family="Liberation Sans" fill="#333"><text x="94" y="86.5" font-size="4">bird</text><text x="105.7" y="82.5" font-size="3.6">has_part</text><path d="M101,85 H125.5" stroke="#333" stroke-width="0.5"></path><path d="M124,84 L126.5,85 L124,86 Z" fill="#333"></path><text x="126.5" y="86.5" font-size="4">wings</text><path d="M96.4,92.6 V87.2 M95.4,88.4 L96.4,86.8 L97.4,88.4" stroke="#333" stroke-width="0.5" fill="none"></path><text x="98.7" y="92.5" font-size="3.6">isa</text><text x="92.9" y="98.6" font-size="4">robin</text><path d="M96.4,105 V99.6 M95.4,100.8 L96.4,99.2 L97.4,100.8" stroke="#333" stroke-width="0.5" fill="none"></path><text x="98.7" y="105.5" font-size="3.6">isa</text><text x="93.6" y="110.6" font-size="4">jack</text></g><g transform="translate(60.2,0)" font-family="Liberation Sans" fill="#333"><text x="94" y="86.5" font-size="4">bird</text><text x="105.7" y="82.5" font-size="3.6">has_part</text><path d="M101,85 H125.5" stroke="#333" stroke-width="0.5"></path><path d="M124,84 L126.5,85 L124,86 Z" fill="#333"></path><text x="126.5" y="86.5" font-size="4">wings</text><path d="M96.4,92.6 V87.2 M95.4,88.4 L96.4,86.8 L97.4,88.4" stroke="#333" stroke-width="0.5" fill="none"></path><text x="98.7" y="92.5" font-size="3.6">isa</text><text x="92.9" y="98.6" font-size="4">robin</text><path d="M96.4,105 V99.6 M95.4,100.8 L96.4,99.2 L97.4,100.8" stroke="#333" stroke-width="0.5" fill="none"></path><text x="98.7" y="105.5" font-size="3.6">isa</text><text x="93.6" y="110.6" font-size="4">jack</text></g><path d="M171.6,85.7 L160,105.3" stroke="#d03040" stroke-width="0.7"></path><text x="170.5" y="97" font-family="Liberation Sans" font-size="3.8" font-style="italic" fill="#d03040">cancel</text></svg><div class="t" style="left: 11px; top: 116.2px; font-size: 6.2px; line-height: 7.6px; -webkit-text-stroke: 0.08px; transform: scaleX(0.9364); transform-origin: 0px 0px;"><span style="color:#2a2a2a;">"Cancel-links" have been proposed, but their status and process model are debatable.</span></div><div class="t" style="left:6px;top:153px;font-size:7px;line-height:8px;color:#555;letter-spacing:-0.5px">FAU</div><div class="a" style="left:36px;top:157.00px;width:69px;height:1px;background:#8090c8"></div><div class="a" style="left:162px;top:157.00px;width:8px;height:1px;background:#8090c8"></div><div class="a" style="left:226px;top:157.00px;width:18px;height:1px;background:#8090c8"></div><div class="a" style="left:262px;top:154.00px;width:16px;height:5px;border-top:1.5px solid #444;border-bottom:1.5px solid #444;background:repeating-linear-gradient(90deg,#444 0 1px,#ddd 1px 3px)"></div></div>
<div class="a" style="left:52px;top:406.8px;width:283px;height:60px;background:#ececec;overflow:hidden"><div class="t" style="left: 5.3px; top: 2.6px; font-size: 9px; line-height: 11px; color: rgb(51, 80, 158); transform: scaleX(0.9068); transform-origin: 0px 0px;">Another Notation for Semantic Networks</div><div class="a" style="left:5px;top:13.10px;width:278px;height:1px;background:#7f8fd0"></div><svg class="a" style="left:6.5px;top:29.90px" width="4" height="4" viewBox="0 0 4 4"><path d="M0,0 L4,2 L0,4 Z" fill="#203c9c"></path></svg><div class="t" style="left: 12.6px; top: 28.1px; font-size: 6.2px; line-height: 7.6px; -webkit-text-stroke: 0.08px; transform: scaleX(0.9836); transform-origin: 0px 0px;"><span style="color:#2a2a2a;font-weight:bold;">Definition 1.13.</span><span style="color:#2a2a2a;"> </span><span style="color:#d0304a;">Function/argument notation</span><span style="color:#2a2a2a;"> for </span><span style="color:#4a6cc4;">semantic networks</span></div><svg class="a" style="left:13.5px;top:38.60px" width="3.2" height="3.2" viewBox="0 0 4 4"><path d="M0,0 L4,2 L0,4 Z" fill="#203c9c"></path></svg><div class="t" style="left: 18.6px; top: 36.4px; font-size: 5.6px; line-height: 7.6px; -webkit-text-stroke: 0.08px; transform: scaleX(0.9474); transform-origin: 0px 0px;"><span style="color:#2a2a2a;">interprets </span><span style="color:#4a6cc4;">nodes</span><span style="color:#2a2a2a;"> as arguments</span></div><div class="t" style="left:auto;right:5.5px;top:36.40px;font-size:5.6px;line-height:7.6px;-webkit-text-stroke:0.08px"><span style="color:#3a9a3a;">(reification to individuals)</span></div><svg class="a" style="left:13.5px;top:45.60px" width="3.2" height="3.2" viewBox="0 0 4 4"><path d="M0,0 L4,2 L0,4 Z" fill="#203c9c"></path></svg><div class="t" style="left: 18.6px; top: 43.4px; font-size: 5.6px; line-height: 7.6px; -webkit-text-stroke: 0.08px; transform: scaleX(0.9776); transform-origin: 0px 0px;"><span style="color:#2a2a2a;">interprets </span><span style="color:#4a6cc4;">links</span><span style="color:#2a2a2a;"> as functions</span></div><div class="t" style="left:auto;right:5.5px;top:43.40px;font-size:5.6px;line-height:7.6px;-webkit-text-stroke:0.08px"><span style="color:#3a9a3a;">(predicates actually)</span></div><svg class="a" style="left:6.5px;top:53.00px" width="4" height="4" viewBox="0 0 4 4"><path d="M0,0 L4,2 L0,4 Z" fill="#203c9c"></path></svg><div class="t" style="left: 12.6px; top: 51.2px; font-size: 6.2px; line-height: 7.6px; -webkit-text-stroke: 0.08px; transform: scaleX(0.9756); transform-origin: 0px 0px;"><span style="color:#2a2a2a;font-weight:bold;">Example 1.14.</span></div></div>
<svg class="a" style="left:303px;top:62px" width="9" height="13" viewBox="0 0 9 13"><path d="M1,1 L1,11 L3.5,8.5 L5.5,12.5 L7,11.8 L5,8 L8.2,8 Z" fill="#111" stroke="#fff" stroke-width="0.7"></path></svg>
</div>
<div class="a" style="left:0;top:544px;width:544px;height:13px;background:#e3e4e5;border-top:1px solid #d0d1d2"></div>
<div class="t" style="left:4.7px;top:546.5px;font-size:8px;color:#444">Page 283 of 368</div>
</div>
</div>
</body></html>
